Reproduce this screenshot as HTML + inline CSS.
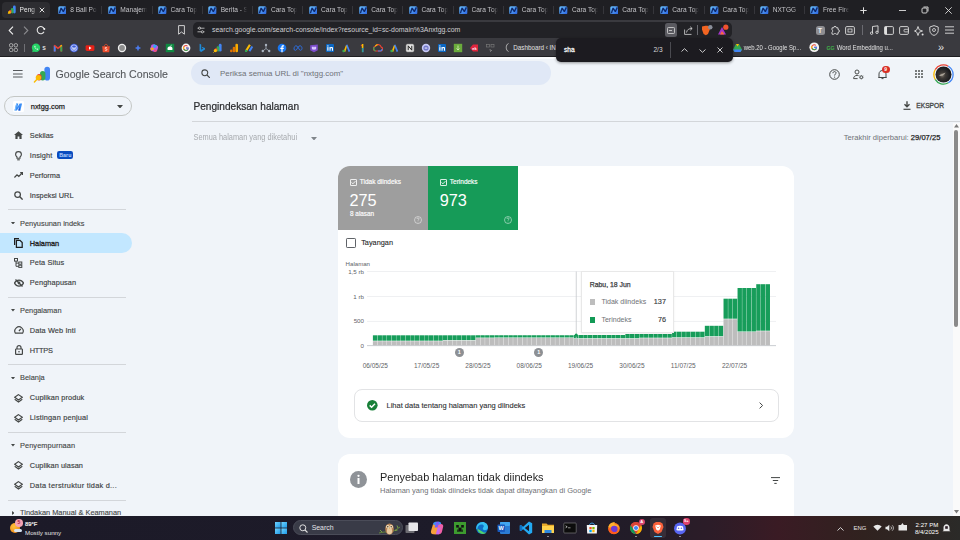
<!DOCTYPE html>
<html><head><meta charset="utf-8"><style>
html,body{margin:0;padding:0;width:960px;height:540px;overflow:hidden;background:#f0f4f9;font-family:"Liberation Sans", sans-serif}
.t{position:absolute;white-space:nowrap;font-family:"Liberation Sans", sans-serif}
</style></head><body>
<div style="position:absolute;left:0px;top:0px;width:960px;height:20px;background:#1f1f23"></div>
<div style="position:absolute;left:2px;top:2px;width:48px;height:15.5px;background:#2d2d31;border-radius:4px"></div>
<svg style="position:absolute;left:7px;top:4.5px" width="9.6" height="9.6" viewBox="0 0 16 16"><rect x="10" y="1" width="4.5" height="13" rx="2.25" fill="#4285f4"/><rect x="6.5" y="5" width="4.5" height="9" rx="2.25" fill="#34a853"/><rect x="3" y="8.5" width="4.5" height="5.5" rx="2.25" fill="#ea4335"/><circle cx="4" cy="12.5" r="2.3" fill="#fbbc04"/><path d="M1 15.5 L4 12.5" stroke="#fbbc04" stroke-width="1.2"/></svg>
<div class="t" style="left:19.6px;top:5.8px;font-size:6.6px;line-height:8.4px;color:#e8e8e8;width:16px;overflow:hidden;transform:scaleY(1.08);-webkit-mask-image:linear-gradient(90deg,#000 70%,rgba(0,0,0,.3))">Peng</div>
<svg style="position:absolute;left:39px;top:7px" width="6" height="6" viewBox="0 0 6 6"><path d="M0.8 0.8L5.2 5.2M5.2 0.8L0.8 5.2" stroke="#e0e0e0" stroke-width="1"/></svg>
<svg style="position:absolute;left:57.68px;top:5.8px" width="8.6" height="8.6" viewBox="0 0 10 10"><defs><linearGradient id="ng" x1="0" y1="0" x2="1" y2="1"><stop offset="0" stop-color="#6cc4ff"/><stop offset="1" stop-color="#2a62e0"/></linearGradient></defs><rect x="0.3" y="0.3" width="9.4" height="9.4" rx="1.8" fill="url(#ng)"/><path d="M1.6 8.4 L3.6 2.4 L6.2 6.6 L8.6 1.6" stroke="#0e2a6e" stroke-width="1.6" fill="none" stroke-linejoin="bevel"/></svg>
<div class="t" style="left:70.18px;top:5.8px;font-size:6.6px;line-height:8.4px;color:#c4c4c8;width:26.5px;overflow:hidden;transform:scaleY(1.06);-webkit-mask-image:linear-gradient(90deg,#000 78%,transparent)">8 Ball Pol</div>
<div style="position:absolute;left:101.36px;top:6px;width:0.7px;height:8px;background:#36363b"></div>
<svg style="position:absolute;left:107.86px;top:5.8px" width="8.6" height="8.6" viewBox="0 0 10 10"><defs><linearGradient id="ng" x1="0" y1="0" x2="1" y2="1"><stop offset="0" stop-color="#6cc4ff"/><stop offset="1" stop-color="#2a62e0"/></linearGradient></defs><rect x="0.3" y="0.3" width="9.4" height="9.4" rx="1.8" fill="url(#ng)"/><path d="M1.6 8.4 L3.6 2.4 L6.2 6.6 L8.6 1.6" stroke="#0e2a6e" stroke-width="1.6" fill="none" stroke-linejoin="bevel"/></svg>
<div class="t" style="left:120.36px;top:5.8px;font-size:6.6px;line-height:8.4px;color:#c4c4c8;width:26.5px;overflow:hidden;transform:scaleY(1.06);-webkit-mask-image:linear-gradient(90deg,#000 78%,transparent)">Manajem</div>
<div style="position:absolute;left:151.54px;top:6px;width:0.7px;height:8px;background:#36363b"></div>
<svg style="position:absolute;left:158.04px;top:5.8px" width="8.6" height="8.6" viewBox="0 0 10 10"><defs><linearGradient id="ng" x1="0" y1="0" x2="1" y2="1"><stop offset="0" stop-color="#6cc4ff"/><stop offset="1" stop-color="#2a62e0"/></linearGradient></defs><rect x="0.3" y="0.3" width="9.4" height="9.4" rx="1.8" fill="url(#ng)"/><path d="M1.6 8.4 L3.6 2.4 L6.2 6.6 L8.6 1.6" stroke="#0e2a6e" stroke-width="1.6" fill="none" stroke-linejoin="bevel"/></svg>
<div class="t" style="left:170.54px;top:5.8px;font-size:6.6px;line-height:8.4px;color:#c4c4c8;width:26.5px;overflow:hidden;transform:scaleY(1.06);-webkit-mask-image:linear-gradient(90deg,#000 78%,transparent)">Cara Top</div>
<div style="position:absolute;left:201.72px;top:6px;width:0.7px;height:8px;background:#36363b"></div>
<svg style="position:absolute;left:208.22px;top:5.8px" width="8.6" height="8.6" viewBox="0 0 10 10"><defs><linearGradient id="ng" x1="0" y1="0" x2="1" y2="1"><stop offset="0" stop-color="#6cc4ff"/><stop offset="1" stop-color="#2a62e0"/></linearGradient></defs><rect x="0.3" y="0.3" width="9.4" height="9.4" rx="1.8" fill="url(#ng)"/><path d="M1.6 8.4 L3.6 2.4 L6.2 6.6 L8.6 1.6" stroke="#0e2a6e" stroke-width="1.6" fill="none" stroke-linejoin="bevel"/></svg>
<div class="t" style="left:220.72px;top:5.8px;font-size:6.6px;line-height:8.4px;color:#c4c4c8;width:26.5px;overflow:hidden;transform:scaleY(1.06);-webkit-mask-image:linear-gradient(90deg,#000 78%,transparent)">Berita - S</div>
<div style="position:absolute;left:251.89999999999998px;top:6px;width:0.7px;height:8px;background:#36363b"></div>
<svg style="position:absolute;left:258.4px;top:5.8px" width="8.6" height="8.6" viewBox="0 0 10 10"><defs><linearGradient id="ng" x1="0" y1="0" x2="1" y2="1"><stop offset="0" stop-color="#6cc4ff"/><stop offset="1" stop-color="#2a62e0"/></linearGradient></defs><rect x="0.3" y="0.3" width="9.4" height="9.4" rx="1.8" fill="url(#ng)"/><path d="M1.6 8.4 L3.6 2.4 L6.2 6.6 L8.6 1.6" stroke="#0e2a6e" stroke-width="1.6" fill="none" stroke-linejoin="bevel"/></svg>
<div class="t" style="left:270.9px;top:5.8px;font-size:6.6px;line-height:8.4px;color:#c4c4c8;width:26.5px;overflow:hidden;transform:scaleY(1.06);-webkit-mask-image:linear-gradient(90deg,#000 78%,transparent)">Cara Top</div>
<div style="position:absolute;left:302.08px;top:6px;width:0.7px;height:8px;background:#36363b"></div>
<svg style="position:absolute;left:308.58px;top:5.8px" width="8.6" height="8.6" viewBox="0 0 10 10"><defs><linearGradient id="ng" x1="0" y1="0" x2="1" y2="1"><stop offset="0" stop-color="#6cc4ff"/><stop offset="1" stop-color="#2a62e0"/></linearGradient></defs><rect x="0.3" y="0.3" width="9.4" height="9.4" rx="1.8" fill="url(#ng)"/><path d="M1.6 8.4 L3.6 2.4 L6.2 6.6 L8.6 1.6" stroke="#0e2a6e" stroke-width="1.6" fill="none" stroke-linejoin="bevel"/></svg>
<div class="t" style="left:321.08px;top:5.8px;font-size:6.6px;line-height:8.4px;color:#c4c4c8;width:26.5px;overflow:hidden;transform:scaleY(1.06);-webkit-mask-image:linear-gradient(90deg,#000 78%,transparent)">Cara Top</div>
<div style="position:absolute;left:352.26px;top:6px;width:0.7px;height:8px;background:#36363b"></div>
<svg style="position:absolute;left:358.76px;top:5.8px" width="8.6" height="8.6" viewBox="0 0 10 10"><defs><linearGradient id="ng" x1="0" y1="0" x2="1" y2="1"><stop offset="0" stop-color="#6cc4ff"/><stop offset="1" stop-color="#2a62e0"/></linearGradient></defs><rect x="0.3" y="0.3" width="9.4" height="9.4" rx="1.8" fill="url(#ng)"/><path d="M1.6 8.4 L3.6 2.4 L6.2 6.6 L8.6 1.6" stroke="#0e2a6e" stroke-width="1.6" fill="none" stroke-linejoin="bevel"/></svg>
<div class="t" style="left:371.26px;top:5.8px;font-size:6.6px;line-height:8.4px;color:#c4c4c8;width:26.5px;overflow:hidden;transform:scaleY(1.06);-webkit-mask-image:linear-gradient(90deg,#000 78%,transparent)">Cara Top</div>
<div style="position:absolute;left:402.44px;top:6px;width:0.7px;height:8px;background:#36363b"></div>
<svg style="position:absolute;left:408.94px;top:5.8px" width="8.6" height="8.6" viewBox="0 0 10 10"><defs><linearGradient id="ng" x1="0" y1="0" x2="1" y2="1"><stop offset="0" stop-color="#6cc4ff"/><stop offset="1" stop-color="#2a62e0"/></linearGradient></defs><rect x="0.3" y="0.3" width="9.4" height="9.4" rx="1.8" fill="url(#ng)"/><path d="M1.6 8.4 L3.6 2.4 L6.2 6.6 L8.6 1.6" stroke="#0e2a6e" stroke-width="1.6" fill="none" stroke-linejoin="bevel"/></svg>
<div class="t" style="left:421.44px;top:5.8px;font-size:6.6px;line-height:8.4px;color:#c4c4c8;width:26.5px;overflow:hidden;transform:scaleY(1.06);-webkit-mask-image:linear-gradient(90deg,#000 78%,transparent)">Cara Top</div>
<div style="position:absolute;left:452.62px;top:6px;width:0.7px;height:8px;background:#36363b"></div>
<svg style="position:absolute;left:459.12px;top:5.8px" width="8.6" height="8.6" viewBox="0 0 10 10"><defs><linearGradient id="ng" x1="0" y1="0" x2="1" y2="1"><stop offset="0" stop-color="#6cc4ff"/><stop offset="1" stop-color="#2a62e0"/></linearGradient></defs><rect x="0.3" y="0.3" width="9.4" height="9.4" rx="1.8" fill="url(#ng)"/><path d="M1.6 8.4 L3.6 2.4 L6.2 6.6 L8.6 1.6" stroke="#0e2a6e" stroke-width="1.6" fill="none" stroke-linejoin="bevel"/></svg>
<div class="t" style="left:471.62px;top:5.8px;font-size:6.6px;line-height:8.4px;color:#c4c4c8;width:26.5px;overflow:hidden;transform:scaleY(1.06);-webkit-mask-image:linear-gradient(90deg,#000 78%,transparent)">Cara Top</div>
<div style="position:absolute;left:502.8px;top:6px;width:0.7px;height:8px;background:#36363b"></div>
<svg style="position:absolute;left:509.3px;top:5.8px" width="8.6" height="8.6" viewBox="0 0 10 10"><defs><linearGradient id="ng" x1="0" y1="0" x2="1" y2="1"><stop offset="0" stop-color="#6cc4ff"/><stop offset="1" stop-color="#2a62e0"/></linearGradient></defs><rect x="0.3" y="0.3" width="9.4" height="9.4" rx="1.8" fill="url(#ng)"/><path d="M1.6 8.4 L3.6 2.4 L6.2 6.6 L8.6 1.6" stroke="#0e2a6e" stroke-width="1.6" fill="none" stroke-linejoin="bevel"/></svg>
<div class="t" style="left:521.8px;top:5.8px;font-size:6.6px;line-height:8.4px;color:#c4c4c8;width:26.5px;overflow:hidden;transform:scaleY(1.06);-webkit-mask-image:linear-gradient(90deg,#000 78%,transparent)">Cara Top</div>
<div style="position:absolute;left:552.98px;top:6px;width:0.7px;height:8px;background:#36363b"></div>
<svg style="position:absolute;left:559.48px;top:5.8px" width="8.6" height="8.6" viewBox="0 0 10 10"><defs><linearGradient id="ng" x1="0" y1="0" x2="1" y2="1"><stop offset="0" stop-color="#6cc4ff"/><stop offset="1" stop-color="#2a62e0"/></linearGradient></defs><rect x="0.3" y="0.3" width="9.4" height="9.4" rx="1.8" fill="url(#ng)"/><path d="M1.6 8.4 L3.6 2.4 L6.2 6.6 L8.6 1.6" stroke="#0e2a6e" stroke-width="1.6" fill="none" stroke-linejoin="bevel"/></svg>
<div class="t" style="left:571.98px;top:5.8px;font-size:6.6px;line-height:8.4px;color:#c4c4c8;width:26.5px;overflow:hidden;transform:scaleY(1.06);-webkit-mask-image:linear-gradient(90deg,#000 78%,transparent)">Cara Top</div>
<div style="position:absolute;left:603.16px;top:6px;width:0.7px;height:8px;background:#36363b"></div>
<svg style="position:absolute;left:609.66px;top:5.8px" width="8.6" height="8.6" viewBox="0 0 10 10"><defs><linearGradient id="ng" x1="0" y1="0" x2="1" y2="1"><stop offset="0" stop-color="#6cc4ff"/><stop offset="1" stop-color="#2a62e0"/></linearGradient></defs><rect x="0.3" y="0.3" width="9.4" height="9.4" rx="1.8" fill="url(#ng)"/><path d="M1.6 8.4 L3.6 2.4 L6.2 6.6 L8.6 1.6" stroke="#0e2a6e" stroke-width="1.6" fill="none" stroke-linejoin="bevel"/></svg>
<div class="t" style="left:622.16px;top:5.8px;font-size:6.6px;line-height:8.4px;color:#c4c4c8;width:26.5px;overflow:hidden;transform:scaleY(1.06);-webkit-mask-image:linear-gradient(90deg,#000 78%,transparent)">Cara Top</div>
<div style="position:absolute;left:653.34px;top:6px;width:0.7px;height:8px;background:#36363b"></div>
<svg style="position:absolute;left:659.84px;top:5.8px" width="8.6" height="8.6" viewBox="0 0 10 10"><defs><linearGradient id="ng" x1="0" y1="0" x2="1" y2="1"><stop offset="0" stop-color="#6cc4ff"/><stop offset="1" stop-color="#2a62e0"/></linearGradient></defs><rect x="0.3" y="0.3" width="9.4" height="9.4" rx="1.8" fill="url(#ng)"/><path d="M1.6 8.4 L3.6 2.4 L6.2 6.6 L8.6 1.6" stroke="#0e2a6e" stroke-width="1.6" fill="none" stroke-linejoin="bevel"/></svg>
<div class="t" style="left:672.34px;top:5.8px;font-size:6.6px;line-height:8.4px;color:#c4c4c8;width:26.5px;overflow:hidden;transform:scaleY(1.06);-webkit-mask-image:linear-gradient(90deg,#000 78%,transparent)">Cara Top</div>
<div style="position:absolute;left:703.52px;top:6px;width:0.7px;height:8px;background:#36363b"></div>
<svg style="position:absolute;left:710.02px;top:5.8px" width="8.6" height="8.6" viewBox="0 0 10 10"><defs><linearGradient id="ng" x1="0" y1="0" x2="1" y2="1"><stop offset="0" stop-color="#6cc4ff"/><stop offset="1" stop-color="#2a62e0"/></linearGradient></defs><rect x="0.3" y="0.3" width="9.4" height="9.4" rx="1.8" fill="url(#ng)"/><path d="M1.6 8.4 L3.6 2.4 L6.2 6.6 L8.6 1.6" stroke="#0e2a6e" stroke-width="1.6" fill="none" stroke-linejoin="bevel"/></svg>
<div class="t" style="left:722.52px;top:5.8px;font-size:6.6px;line-height:8.4px;color:#c4c4c8;width:26.5px;overflow:hidden;transform:scaleY(1.06);-webkit-mask-image:linear-gradient(90deg,#000 78%,transparent)">Cara Top</div>
<div style="position:absolute;left:753.7px;top:6px;width:0.7px;height:8px;background:#36363b"></div>
<svg style="position:absolute;left:760.2px;top:5.8px" width="8.6" height="8.6" viewBox="0 0 10 10"><defs><linearGradient id="ng" x1="0" y1="0" x2="1" y2="1"><stop offset="0" stop-color="#6cc4ff"/><stop offset="1" stop-color="#2a62e0"/></linearGradient></defs><rect x="0.3" y="0.3" width="9.4" height="9.4" rx="1.8" fill="url(#ng)"/><path d="M1.6 8.4 L3.6 2.4 L6.2 6.6 L8.6 1.6" stroke="#0e2a6e" stroke-width="1.6" fill="none" stroke-linejoin="bevel"/></svg>
<div class="t" style="left:772.7px;top:5.8px;font-size:6.6px;line-height:8.4px;color:#c4c4c8;width:26.5px;overflow:hidden;transform:scaleY(1.06);-webkit-mask-image:linear-gradient(90deg,#000 78%,transparent)">NXTGG -</div>
<div style="position:absolute;left:803.88px;top:6px;width:0.7px;height:8px;background:#36363b"></div>
<svg style="position:absolute;left:810.38px;top:5.8px" width="8.6" height="8.6" viewBox="0 0 10 10"><defs><linearGradient id="ng" x1="0" y1="0" x2="1" y2="1"><stop offset="0" stop-color="#6cc4ff"/><stop offset="1" stop-color="#2a62e0"/></linearGradient></defs><rect x="0.3" y="0.3" width="9.4" height="9.4" rx="1.8" fill="url(#ng)"/><path d="M1.6 8.4 L3.6 2.4 L6.2 6.6 L8.6 1.6" stroke="#0e2a6e" stroke-width="1.6" fill="none" stroke-linejoin="bevel"/></svg>
<div class="t" style="left:822.88px;top:5.8px;font-size:6.6px;line-height:8.4px;color:#c4c4c8;width:26.5px;overflow:hidden;transform:scaleY(1.06);-webkit-mask-image:linear-gradient(90deg,#000 78%,transparent)">Free Fire</div>
<svg style="position:absolute;left:859.5px;top:6.5px" width="7" height="7" viewBox="0 0 7 7"><path d="M3.5 0.3V6.7M0.3 3.5H6.7" stroke="#e0e0e0" stroke-width="1"/></svg>
<svg style="position:absolute;left:899px;top:9.5px" width="7" height="1" viewBox="0 0 7 1"><path d="M0 0.5H7" stroke="#e0e0e0" stroke-width="0.9"/></svg>
<svg style="position:absolute;left:921px;top:6px" width="8" height="8" viewBox="0 0 8 8"><rect x="1" y="2" width="5" height="5" rx="1" fill="none" stroke="#e0e0e0" stroke-width="0.9"/><path d="M2.5 1H7V5.5" fill="none" stroke="#e0e0e0" stroke-width="0.9"/></svg>
<svg style="position:absolute;left:944.5px;top:6.5px" width="7" height="7" viewBox="0 0 7 7"><path d="M0.3 0.3L6.7 6.7M6.7 0.3L0.3 6.7" stroke="#e0e0e0" stroke-width="0.9"/></svg>
<div style="position:absolute;left:0px;top:20px;width:960px;height:37px;background:#3a3a3f"></div>
<svg style="position:absolute;left:8px;top:25.5px" width="6" height="9" viewBox="0 0 6 9"><path d="M5 0.6L1.2 4.5L5 8.4" fill="none" stroke="#f0f0f0" stroke-width="1.1"/></svg>
<svg style="position:absolute;left:23px;top:25.5px" width="6" height="9" viewBox="0 0 6 9"><path d="M1 0.6L4.8 4.5L1 8.4" fill="none" stroke="#8c8c90" stroke-width="1.1"/></svg>
<svg style="position:absolute;left:35.5px;top:24.5px" width="10" height="10" viewBox="0 0 10 10"><path d="M8.2 4A3.6 3.6 0 1 0 8 6.8" fill="none" stroke="#e8e8e8" stroke-width="1.1"/><circle cx="8.3" cy="4" r="1" fill="#f4f4f4"/></svg>
<svg style="position:absolute;left:178px;top:25px" width="7" height="10" viewBox="0 0 7 10"><path d="M0.6 0.6H6.4V9.2L3.5 7L0.6 9.2Z" fill="none" stroke="#e0e0e0" stroke-width="0.9"/></svg>
<div style="position:absolute;left:193.3px;top:22px;width:539.2px;height:16px;background:#222226;border-radius:5px"></div>
<svg style="position:absolute;left:197px;top:26px" width="8" height="8" viewBox="0 0 8 8"><path d="M0.5 2.2H7.5M0.5 5.8H7.5" stroke="#d0d0d0" stroke-width="0.8"/><circle cx="2.6" cy="2.2" r="1.1" fill="#232327" stroke="#d0d0d0" stroke-width="0.8"/><circle cx="5.4" cy="5.8" r="1.1" fill="#232327" stroke="#d0d0d0" stroke-width="0.8"/></svg>
<div class="t" style="left:212px;top:26.34px;font-size:6.93px;line-height:8.32px;color:#cfcfd3;font-weight:400;">search.google.com/search-console/index?resource_id=sc-domain%3Anxtgg.com</div>
<div style="position:absolute;left:664.5px;top:23.2px;width:12.5px;height:13.6px;background:#5a5a60;border-radius:2.5px"></div>
<svg style="position:absolute;left:667px;top:26.5px" width="8" height="7" viewBox="0 0 8 7"><rect x="0.5" y="0.5" width="7" height="6" rx="0.8" fill="none" stroke="#d8d8d8" stroke-width="0.8"/><path d="M2 3.5H5" stroke="#d8d8d8" stroke-width="0.8"/></svg>
<svg style="position:absolute;left:684px;top:25.5px" width="9" height="9" viewBox="0 0 9 9"><path d="M0.6 3.5V8.4H7.5" fill="none" stroke="#d8d8d8" stroke-width="0.8"/><path d="M2.5 6.5C3 3.5 5 2.5 8 2.5M6.2 0.7L8.2 2.5L6.2 4.3" fill="none" stroke="#d8d8d8" stroke-width="0.8"/></svg>
<div style="position:absolute;left:696.5px;top:25px;width:0.8px;height:10px;background:#6a6a70"></div>
<svg style="position:absolute;left:701px;top:24.5px" width="12" height="11" viewBox="0 0 12 11"><path d="M1 1.5L4.5 0.8H6.5L8 1.5L8.8 4.5L7 9L4.8 10.3L2.6 9L1 4.5Z" fill="#f26522"/><circle cx="9.3" cy="2.3" r="2.2" fill="#8a8f9a"/></svg>
<svg style="position:absolute;left:717px;top:24px" width="13" height="12" viewBox="0 0 13 12"><path d="M1 10.5L5 3L9 10.5Z" fill="#a335c9"/><path d="M3 10.5L5 7L7.5 10.5Z" fill="#ff6a3d"/><circle cx="8.8" cy="3.2" r="2.6" fill="#f0522f"/></svg>
<div style="position:absolute;left:862px;top:25px;width:0.8px;height:10px;background:#6a6a70"></div>
<div style="position:absolute;left:815.5px;top:25.5px;width:9px;height:9px;border-radius:2.5px;background:#8e8e92;color:#f4f4f4;font:bold 6.5px/9px 'Liberation Sans';text-align:center">T</div>
<svg style="position:absolute;left:830px;top:25px" width="10" height="10" viewBox="0 0 10 10"><path d="M2 2.8H3.6A1.4 1.4 0 0 1 6.4 2.8H8V4.6A1.4 1.4 0 0 1 8 7.4V9.2H6.2A1.4 1.4 0 0 0 3.8 9.2H2V7.2A1.4 1.4 0 0 0 2 4.8Z" fill="none" stroke="#e0e0e0" stroke-width="0.9"/></svg>
<svg style="position:absolute;left:844.5px;top:25.5px" width="10" height="9" viewBox="0 0 10 9"><rect x="0.6" y="0.6" width="8.8" height="7.8" rx="1.2" fill="none" stroke="#e0e0e0" stroke-width="0.9"/><rect x="3" y="3" width="4" height="3" fill="none" stroke="#e0e0e0" stroke-width="0.8"/></svg>
<svg style="position:absolute;left:869.5px;top:25px" width="9" height="10" viewBox="0 0 9 10"><path d="M2.5 8V1.5L8 0.8V7" fill="none" stroke="#e0e0e0" stroke-width="0.9"/><circle cx="1.6" cy="8.2" r="1.2" fill="none" stroke="#e0e0e0" stroke-width="0.9"/><circle cx="7" cy="7.3" r="1.2" fill="none" stroke="#e0e0e0" stroke-width="0.9"/></svg>
<svg style="position:absolute;left:884px;top:25.5px" width="10" height="9" viewBox="0 0 10 9"><rect x="0.6" y="0.6" width="8.8" height="7.8" rx="1" fill="none" stroke="#e0e0e0" stroke-width="0.9"/><rect x="0.6" y="0.6" width="2.4" height="7.8" fill="#e0e0e0"/></svg>
<svg style="position:absolute;left:899px;top:25.5px" width="10" height="9" viewBox="0 0 10 9"><rect x="0.6" y="0.6" width="8.8" height="7.8" rx="1.2" fill="none" stroke="#e0e0e0" stroke-width="0.9"/><rect x="5" y="3.3" width="4.4" height="2.6" rx="0.8" fill="none" stroke="#e0e0e0" stroke-width="0.8"/></svg>
<svg style="position:absolute;left:914px;top:24.5px" width="10" height="11" viewBox="0 0 10 11"><path d="M4 1.5L5.2 4.8L8.5 6L5.2 7.2L4 10.5L2.8 7.2L0.5 6L2.8 4.8Z" fill="none" stroke="#e0e0e0" stroke-width="0.9"/><circle cx="8.6" cy="9.4" r="1" fill="#e0e0e0"/></svg>
<svg style="position:absolute;left:929px;top:24.5px" width="10" height="11" viewBox="0 0 10 11"><path d="M5 0.6L9.2 2V5.5C9.2 8 7.2 9.8 5 10.4C2.8 9.8 0.8 8 0.8 5.5V2Z" fill="none" stroke="#e0e0e0" stroke-width="0.9"/><circle cx="5" cy="5" r="1.5" fill="none" stroke="#e0e0e0" stroke-width="0.8"/></svg>
<svg style="position:absolute;left:944.5px;top:26px" width="9" height="8" viewBox="0 0 9 8"><path d="M0 0.8H9M0 4H9M0 7.2H9" stroke="#e0e0e0" stroke-width="0.9"/></svg>
<svg style="position:absolute;left:8.5px;top:43px" width="9" height="9.3" viewBox="0 0 9 9"><g fill="none" stroke="#d0d0d0" stroke-width="0.75"><rect x="0.5" y="0.5" width="3.3" height="3.3" rx="1.3"/><rect x="5.2" y="0.5" width="3.3" height="3.3" rx="1.3"/><rect x="0.5" y="5.2" width="3.3" height="3.3" rx="1.3"/><rect x="5.2" y="5.2" width="3.3" height="3.3" rx="1.3"/></g></svg>
<div style="position:absolute;left:24.2px;top:43.5px;width:0.8px;height:8px;background:#707075"></div>
<svg style="position:absolute;left:30.9px;top:42.6px" width="10" height="10" viewBox="0 0 10 10"><circle cx="5" cy="4.8" r="4.2" fill="#25d366"/><path d="M1.2 9.3L1.8 6.8L3.5 8.4Z" fill="#25d366"/><path d="M3.4 3C3.2 4.8 5 6.8 6.9 6.7L7.3 5.9L6.2 5.4L5.7 5.9C5 5.6 4.4 5 4.1 4.3L4.6 3.8L4.1 2.7Z" fill="#fff"/></svg>
<svg style="position:absolute;left:53.1px;top:42.6px" width="10" height="10" viewBox="0 0 10 10"><path d="M0.8 2.5L1.8 1.8L5 4.3L8.2 1.8L9.2 2.5V8.4H7.4V4.4L5 6.2L2.6 4.4V8.4H0.8Z" fill="#ea4335"/><path d="M0.8 2.5V8.4H2.6V4.4Z" fill="#4285f4"/><path d="M9.2 2.5V8.4H7.4V4.4Z" fill="#34a853"/><path d="M7.4 4.4L9.2 2.5L8.2 1.8L7.4 2.4Z" fill="#fbbc04"/></svg>
<svg style="position:absolute;left:69.1px;top:42.6px" width="10" height="10" viewBox="0 0 10 10"><circle cx="5" cy="5" r="4.3" fill="#3b5bdb"/><circle cx="5" cy="5" r="3.1" fill="none" stroke="#dfe6ff" stroke-width="0.7"/><path d="M3 3.6L4.1 6.8L5 4.5L5.9 6.8L7 3.6" fill="none" stroke="#fff" stroke-width="0.7"/></svg>
<svg style="position:absolute;left:85.0px;top:42.6px" width="10" height="10" viewBox="0 0 10 10"><rect x="0.6" y="2.2" width="8.8" height="5.8" rx="1.4" fill="#e62117"/><path d="M4 3.5L6.5 5.1L4 6.7Z" fill="#fff"/></svg>
<svg style="position:absolute;left:101.0px;top:42.6px" width="10" height="10" viewBox="0 0 10 10"><path d="M1.2 3.2H8.8L8.2 9.2H1.8Z" fill="#ee4d2d"/><path d="M3.3 3.2C3.3 0.8 6.7 0.8 6.7 3.2" fill="none" stroke="#ee4d2d" stroke-width="0.8"/><path d="M6 4.8C5.2 4.2 4 4.4 4 5.1C4 6 6 5.7 6 6.7C6 7.5 4.6 7.6 3.9 7" fill="none" stroke="#fff" stroke-width="0.7"/></svg>
<svg style="position:absolute;left:116.9px;top:42.6px" width="10" height="10" viewBox="0 0 10 10"><circle cx="5" cy="5" r="4.2" fill="#f0f0f0"/><circle cx="5" cy="5" r="2.9" fill="#8e8e8e"/></svg>
<svg style="position:absolute;left:132.6px;top:42.6px" width="10" height="10" viewBox="0 0 10 10"><path d="M5 1.8L6 4L8.2 5L6 6L5 8.2L4 6L1.8 5L4 4Z" fill="#4b7bec"/></svg>
<svg style="position:absolute;left:148.8px;top:42.6px" width="10" height="10" viewBox="0 0 10 10"><path d="M2 3.5C2 1.8 3.5 1 5 1.3L8 2.5C9 3 9.3 4 9 5L8.2 7.2C7.7 8.6 6.4 9.2 5 8.8L2.3 7.8C1.2 7.3 1 6.2 1.3 5.2Z" fill="#c058e0"/><path d="M5 1.3L8 2.5L6.5 5L3.8 4.2Z" fill="#2ea8f5"/><path d="M1.3 5.2L3.8 4.2L5.3 6.3L2.3 7.8Z" fill="#f5a524"/><path d="M5.3 6.3L8.2 7.2C7.7 8.6 6.4 9.2 5 8.8Z" fill="#f04e7a"/></svg>
<svg style="position:absolute;left:165.0px;top:42.6px" width="10" height="10" viewBox="0 0 10 10"><rect x="0.8" y="0.8" width="8.4" height="8.4" fill="#0f8a42"/><path d="M2.6 7V5.3C2.6 4.2 3.6 3.6 5 3.6C6.4 3.6 7.4 4.2 7.4 5.3V7Z" fill="#fff"/><path d="M5.6 3.6L6.4 1.8" stroke="#fff" stroke-width="0.6"/></svg>
<svg style="position:absolute;left:180.9px;top:42.6px" width="10" height="10" viewBox="0 0 10 10"><circle cx="5" cy="5" r="4.4" fill="#f4f4f4"/><path d="M7.6 4.6H5V5.6H6.5C6.3 6.4 5.7 6.9 5 6.9C3.9 6.9 3.1 6.1 3.1 5C3.1 3.9 3.9 3.1 5 3.1C5.5 3.1 5.9 3.3 6.2 3.6L6.9 2.9C6.4 2.4 5.7 2.1 5 2.1C3.4 2.1 2.1 3.4 2.1 5C2.1 6.6 3.4 7.9 5 7.9C6.6 7.9 7.7 6.8 7.7 5.1Z" fill="#ea4335"/><path d="M2.4 6.3C2.9 7.3 3.9 7.9 5 7.9C5.9 7.9 6.7 7.5 7.2 6.9L6.4 6.3C6.1 6.7 5.6 6.9 5 6.9C4.2 6.9 3.6 6.4 3.3 5.8Z" fill="#34a853"/><path d="M7.6 4.6H5V5.6H6.5C6.4 5.9 6.3 6.1 6.2 6.2L7.1 6.9C7.5 6.4 7.7 5.8 7.7 5.1Z" fill="#4285f4"/><path d="M2.1 5C2.1 5.5 2.2 5.9 2.4 6.3L3.3 5.8C3.2 5.5 3.1 5.3 3.1 5C3.1 4.7 3.2 4.4 3.3 4.2L2.4 3.6C2.2 4 2.1 4.5 2.1 5Z" fill="#fbbc04"/></svg>
<svg style="position:absolute;left:197.0px;top:42.6px" width="10" height="10" viewBox="0 0 10 10"><path d="M2.6 0.8L4.2 1.4V6.8L6.2 5.6L5.2 5.1L4.7 3.8L8 5L8 6.5L4.2 8.9L2.6 7.9Z" fill="#1f8ad6"/></svg>
<svg style="position:absolute;left:213.0px;top:42.6px" width="10" height="10" viewBox="0 0 10 10"><rect x="5.8" y="0.8" width="2.8" height="7.8" rx="1.4" fill="#4285f4"/><rect x="3.6" y="3.2" width="2.8" height="5.4" rx="1.4" fill="#34a853"/><rect x="1.6" y="5.2" width="2.8" height="3.4" rx="1.4" fill="#ea4335"/><circle cx="2.4" cy="7.6" r="1.6" fill="#fbbc04"/><path d="M0.4 9.6L1.8 8.2" stroke="#fbbc04" stroke-width="0.9"/></svg>
<svg style="position:absolute;left:229.3px;top:42.6px" width="10" height="10" viewBox="0 0 10 10"><rect x="6.4" y="0.8" width="2.6" height="8.4" rx="1.2" fill="#f9ab00"/><rect x="3.7" y="3.8" width="2.6" height="5.4" rx="1.2" fill="#e37400"/><circle cx="2.3" cy="7.9" r="1.3" fill="#e37400"/></svg>
<svg style="position:absolute;left:244.3px;top:42.6px" width="10" height="10" viewBox="0 0 10 10"><path d="M1.2 7.2L5 1.2L6.8 2.3L3 8.3Z" fill="#fbbc04"/><path d="M4.6 7.6L7.5 3L9.2 4.1L6.3 8.7Z" fill="#4285f4"/><circle cx="2.1" cy="7.9" r="1.2" fill="#34a853"/></svg>
<svg style="position:absolute;left:260.8px;top:42.6px" width="10" height="10" viewBox="0 0 10 10"><circle cx="5" cy="2" r="1.2" fill="#aab4c0"/><circle cx="1.8" cy="8" r="1.2" fill="#aab4c0"/><circle cx="8.2" cy="8" r="1.2" fill="#aab4c0"/><path d="M5 2V5.5L1.8 8M5 5.5L8.2 8" stroke="#aab4c0" stroke-width="0.8" fill="none"/></svg>
<svg style="position:absolute;left:277.0px;top:42.6px" width="10" height="10" viewBox="0 0 10 10"><circle cx="5" cy="5" r="4.3" fill="#1877f2"/><path d="M5.6 9.3V6H6.7L6.9 4.8H5.6V4C5.6 3.6 5.8 3.4 6.2 3.4H7V2.3C6.6 2.2 6.2 2.2 5.9 2.2C5 2.2 4.4 2.8 4.4 3.8V4.8H3.3V6H4.4V9.3Z" fill="#fff"/></svg>
<svg style="position:absolute;left:293.0px;top:42.6px" width="10" height="10" viewBox="0 0 10 10"><path d="M1 6C1 4 2 2.8 3 2.8C4.5 2.8 5.5 5 6 6C6.5 6.8 7 7.3 7.5 7.3C8.3 7.3 9 6.6 9 5.3C9 4 8.2 2.8 7 2.8C5.5 2.8 4.5 5 4 6C3.5 6.8 3 7.3 2.4 7.3C1.6 7.3 1 6.8 1 6Z" fill="none" stroke="#2d6fe0" stroke-width="0.95"/></svg>
<svg style="position:absolute;left:309.0px;top:42.6px" width="10" height="10" viewBox="0 0 10 10"><path d="M1.2 2.2L8.8 1.6V7.2L5 9.2L1.2 7.2Z" fill="#7c4dcc"/><path d="M2.8 4L4.2 3.6L5 4.4L5.8 3.6L7.2 4L7 6.2L5 6.8L3 6.2Z" fill="#d9c8ff"/></svg>
<svg style="position:absolute;left:325.0px;top:42.6px" width="10" height="10" viewBox="0 0 10 10"><rect x="1" y="1" width="8" height="8" rx="1" fill="#0a66c2"/><rect x="2.3" y="4.1" width="1.2" height="3.6" fill="#fff"/><circle cx="2.9" cy="2.9" r="0.7" fill="#fff"/><path d="M4.5 7.7V4.1H5.6V4.6C5.9 4.1 6.4 4 6.8 4C7.6 4 8 4.5 8 5.4V7.7H6.9V5.6C6.9 5.1 6.7 4.9 6.3 4.9C5.9 4.9 5.6 5.2 5.6 5.7V7.7Z" fill="#fff"/></svg>
<svg style="position:absolute;left:340.8px;top:42.6px" width="10" height="10" viewBox="0 0 10 10"><path d="M2.6 8.4L5 2L6.4 2.6L4.2 9Z" fill="#fbbc04"/><path d="M5 2L6.4 1.6L9.2 8.3L7.6 9Z" fill="#4285f4"/><circle cx="2.6" cy="8" r="1.3" fill="#34a853"/></svg>
<svg style="position:absolute;left:356.8px;top:42.6px" width="10" height="10" viewBox="0 0 10 10"><path d="M3.5 2.5L6 1V4Z" fill="#ea4335"/><rect x="4.8" y="1" width="1.6" height="4" fill="#fbbc04"/><rect x="4.8" y="5" width="1.6" height="4.2" fill="#34a853"/><rect x="5.6" y="5" width="0.8" height="4.2" fill="#4285f4"/></svg>
<svg style="position:absolute;left:372.5px;top:42.6px" width="10" height="10" viewBox="0 0 10 10"><path d="M2.6 8A2.4 2.4 0 0 1 2.3 3.3A3.2 3.2 0 0 1 8.2 4.1A2 2 0 0 1 7.6 8Z" fill="none" stroke="#ea4335" stroke-width="1.2"/><path d="M2.6 8A2.4 2.4 0 0 1 1.5 4" fill="none" stroke="#34a853" stroke-width="1.2"/><path d="M5 8H7.6A2 2 0 0 0 9 6" fill="none" stroke="#4285f4" stroke-width="1.2"/><path d="M2.3 3.3A3.2 3.2 0 0 1 4.6 1.6" fill="none" stroke="#fbbc04" stroke-width="1.2"/></svg>
<svg style="position:absolute;left:388.8px;top:42.6px" width="10" height="10" viewBox="0 0 10 10"><path d="M2.6 8.4L5 2L6.4 2.6L4.2 9Z" fill="#fbbc04"/><path d="M5 2L6.4 1.6L9.2 8.3L7.6 9Z" fill="#4285f4"/><circle cx="2.6" cy="8" r="1.3" fill="#34a853"/></svg>
<svg style="position:absolute;left:405.0px;top:42.6px" width="10" height="10" viewBox="0 0 10 10"><rect x="1" y="1" width="8" height="8" rx="1.5" fill="#e8e8e8" stroke="#777" stroke-width="0.6"/><path d="M3.2 2.8V7.2M3.2 2.8L6.8 7.2M6.8 2.8V7.2" stroke="#222" stroke-width="1"/></svg>
<svg style="position:absolute;left:420.8px;top:42.6px" width="10" height="10" viewBox="0 0 10 10"><circle cx="5" cy="5" r="4.2" fill="#c6c8f5"/><circle cx="5" cy="5" r="2.6" fill="#7479c9"/><rect x="3.7" y="4.6" width="2.6" height="0.9" fill="#fff"/></svg>
<svg style="position:absolute;left:437.0px;top:42.6px" width="10" height="10" viewBox="0 0 10 10"><rect x="1" y="1" width="8" height="8" rx="1" fill="#0a66c2"/><rect x="2.3" y="4.1" width="1.2" height="3.6" fill="#fff"/><circle cx="2.9" cy="2.9" r="0.7" fill="#fff"/><path d="M4.5 7.7V4.1H5.6V4.6C5.9 4.1 6.4 4 6.8 4C7.6 4 8 4.5 8 5.4V7.7H6.9V5.6C6.9 5.1 6.7 4.9 6.3 4.9C5.9 4.9 5.6 5.2 5.6 5.7V7.7Z" fill="#fff"/></svg>
<svg style="position:absolute;left:453.0px;top:42.6px" width="10" height="10" viewBox="0 0 10 10"><rect x="0.8" y="0.8" width="8.4" height="8.4" fill="#6aab3c"/><path d="M5 2.5V6.5M3.5 5.5L5 7L6.5 5.5" fill="none" stroke="#eaffd0" stroke-width="0.7"/></svg>
<svg style="position:absolute;left:469.0px;top:42.6px" width="10" height="10" viewBox="0 0 10 10"><path d="M1 5L4 1.5H9V8.5H4Z" fill="#e0263e"/><text x="5.6" y="6.6" font-size="4" font-family="Liberation Sans" font-weight="700" fill="#fff" text-anchor="middle">ek</text></svg>
<div class="t" style="left:42.3px;top:44.30px;font-size:6.5px;line-height:7.80px;color:#d8d8d8;font-weight:700;">s</div>
<svg style="position:absolute;left:485.5px;top:43.5px" width="9" height="8" viewBox="0 0 9 8"><rect x="0.5" y="0.5" width="3" height="2.5" fill="none" stroke="#777" stroke-width="0.7"/><rect x="5" y="0.5" width="3" height="2.5" fill="none" stroke="#777" stroke-width="0.7"/><path d="M4 5L4.5 7.5L6 6" fill="none" stroke="#999" stroke-width="0.7"/></svg>
<svg style="position:absolute;left:504px;top:43px" width="6" height="9" viewBox="0 0 6 9"><path d="M4.5 0.5C1.5 1.5 1.5 7.5 4.5 8.5" fill="none" stroke="#cccccc" stroke-width="0.8"/></svg>
<div class="t" style="left:513.2px;top:44.32px;font-size:6.3px;line-height:7.56px;color:#e0e0e0;font-weight:400;">Dashboard ‹ INF</div>
<svg style="position:absolute;left:733px;top:43.5px" width="9" height="8" viewBox="0 0 9 8"><path d="M3 0L6 0L9 5.5L7.5 8L1.5 8L0 5.5Z" fill="#34a853"/><path d="M0 5.5L1.5 8L7.5 8L9 5.5Z" fill="#4285f4"/><path d="M3 0L6 0L4.5 2.6Z" fill="#fbbc04"/></svg>
<div class="t" style="left:743.7px;top:44.53px;font-size:5.95px;line-height:7.14px;color:#e0e0e0;font-weight:400;transform:scaleY(1.12);transform-origin:0 50%">web.20 - Google Sp...</div>
<svg style="position:absolute;left:808.75px;top:42.35px" width="10.5" height="10.5" viewBox="0 0 10 10"><circle cx="5" cy="5" r="4.6" fill="#f4f4f4"/><path d="M7.6 4.6H5V5.6H6.5C6.3 6.4 5.7 6.9 5 6.9C3.9 6.9 3.1 6.1 3.1 5C3.1 3.9 3.9 3.1 5 3.1C5.5 3.1 5.9 3.3 6.2 3.6L6.9 2.9C6.4 2.4 5.7 2.1 5 2.1C3.4 2.1 2.1 3.4 2.1 5C2.1 6.6 3.4 7.9 5 7.9C6.6 7.9 7.7 6.8 7.7 5.1Z" fill="#ea4335"/><path d="M2.4 6.3C2.9 7.3 3.9 7.9 5 7.9C5.9 7.9 6.7 7.5 7.2 6.9L6.4 6.3C6.1 6.7 5.6 6.9 5 6.9C4.2 6.9 3.6 6.4 3.3 5.8Z" fill="#34a853"/><path d="M7.6 4.6H5V5.6H6.5C6.4 5.9 6.3 6.1 6.2 6.2L7.1 6.9C7.5 6.4 7.7 5.8 7.7 5.1Z" fill="#4285f4"/><path d="M2.1 5C2.1 5.5 2.2 5.9 2.4 6.3L3.3 5.8C3.2 5.5 3.1 5.3 3.1 5C3.1 4.7 3.2 4.4 3.3 4.2L2.4 3.6C2.2 4 2.1 4.5 2.1 5Z" fill="#fbbc04"/></svg>
<div class="t" style="left:826.5px;top:44.88px;font-size:5.2px;line-height:6.24px;color:#3fae49;font-weight:700;">GG</div>
<div class="t" style="left:836.7px;top:44.50px;font-size:6.0px;line-height:7.20px;color:#e0e0e0;font-weight:400;transform:scaleY(1.12);transform-origin:0 50%">Word Embedding u...</div>
<div class="t" style="left:938px;top:40.70px;font-size:11px;line-height:13.20px;color:#e0e0e0;font-weight:400;">»</div>
<div style="position:absolute;left:0px;top:57px;width:960px;height:459px;background:#f0f4f9"></div>
<div style="position:absolute;left:0px;top:55.6px;width:960px;height:1.4px;background:#1e1e21"></div>
<div style="position:absolute;left:0px;top:57px;width:960px;height:1.8px;background:#fbfcfe"></div>
<svg style="position:absolute;left:13.3px;top:70px" width="9.6" height="8" viewBox="0 0 9.6 8"><path d="M0 0.5H9.6M0 3.9H9.6M0 7H9.6" stroke="#55585c" stroke-width="1.05"/></svg>
<svg style="position:absolute;left:33px;top:65px" width="19" height="18" viewBox="33 65 19 18"><rect x="44.4" y="66.7" width="5.6" height="13.8" rx="2.8" fill="#4285f4"/><rect x="40" y="71" width="5.4" height="9.5" rx="2.7" fill="#34a853"/><rect x="36.6" y="74" width="5" height="6.5" rx="2.5" fill="#ea4335"/><circle cx="38.4" cy="77.6" r="2.7" fill="#fbbc04"/><path d="M36.8 79.4L34.4 81.9" stroke="#fbbc04" stroke-width="1.4" stroke-linecap="round"/></svg>
<div class="t" style="left:55.5px;top:68.44px;font-size:10.6px;line-height:12.72px;color:#55585c;font-weight:400;transform:scaleY(1.08);transform-origin:0 50%;-webkit-text-stroke:0.12px #55585c">Google Search Console</div>
<div style="position:absolute;left:4.2px;top:96.4px;width:127.5px;height:19.8px;border:0.8px solid #c4c7c5;border-radius:10px;box-sizing:border-box"></div>
<div style="position:absolute;left:12.8px;top:101px;width:11px;height:10.7px;background:#ffffff;border-radius:1.5px"></div>
<svg style="position:absolute;left:14px;top:102.5px" width="8.6" height="8" viewBox="0 0 10 9.3"><path d="M0.6 8.6L2.6 0.6H5L4 4.6L6.6 0.6H9.4L7.4 8.6H5L6 4.6L3.4 8.6Z" fill="#3a8ef6"/><path d="M0.6 8.6L2.6 0.6H3.6L1.8 8.6Z" fill="#7cc0ff"/><path d="M5 8.6L6 4.6L7.4 8.6Z" fill="#1d4fc4"/></svg>
<div class="t" style="left:30.8px;top:103.16px;font-size:7.4px;line-height:8.88px;color:#1f1f1f;font-weight:400;-webkit-text-stroke:0.25px #1f1f1f">nxtgg.com</div>
<svg style="position:absolute;left:116.5px;top:104.8px" width="6" height="3.5" viewBox="0 0 6 3.5"><path d="M0 0H6L3 3.5Z" fill="#444746"/></svg>
<div style="position:absolute;left:190.8px;top:61.2px;width:360.5px;height:24px;background:#e0e8f6;border-radius:12px"></div>
<svg style="position:absolute;left:200.5px;top:68.5px" width="9.5" height="9.5" viewBox="0 0 10 10"><circle cx="4" cy="4" r="3.1" fill="none" stroke="#444746" stroke-width="1.1"/><path d="M6.3 6.3L9.3 9.3" stroke="#444746" stroke-width="1.2"/></svg>
<div class="t" style="left:220px;top:68.73px;font-size:7.95px;line-height:9.54px;color:#6f7276;font-weight:400;">Periksa semua URL di "nxtgg.com"</div>
<svg style="position:absolute;left:828.5px;top:68.5px" width="11" height="11" viewBox="0 0 11 11"><circle cx="5.5" cy="5.5" r="4.8" fill="none" stroke="#444746" stroke-width="1"/><path d="M3.9 4.2C3.9 3.2 4.6 2.6 5.5 2.6C6.4 2.6 7.1 3.2 7.1 4C7.1 5 5.6 5.2 5.6 6.5" fill="none" stroke="#444746" stroke-width="1"/><circle cx="5.6" cy="8.1" r="0.6" fill="#444746"/></svg>
<svg style="position:absolute;left:852.5px;top:68.5px" width="11" height="11" viewBox="0 0 11 11"><circle cx="4" cy="3" r="2" fill="none" stroke="#444746" stroke-width="0.95"/><path d="M0.6 9.6C0.6 7.5 2.2 6.4 4 6.4C4.7 6.4 5.2 6.5 5.6 6.7" fill="none" stroke="#444746" stroke-width="0.95"/><path d="M0.6 9.6H4.6" stroke="#444746" stroke-width="0.95"/><circle cx="8.3" cy="8.2" r="1.35" fill="none" stroke="#444746" stroke-width="0.9"/><path d="M8.3 6V6.7M8.3 9.7V10.4M6.1 8.2H6.8M9.8 8.2H10.5M6.75 6.65L7.25 7.15M9.35 9.25L9.85 9.75M6.75 9.75L7.25 9.25M9.35 7.15L9.85 6.65" stroke="#444746" stroke-width="0.8"/></svg>
<svg style="position:absolute;left:877.5px;top:68.5px" width="9" height="11" viewBox="0 0 9 11"><path d="M1 8.3V5C1 2.8 2.5 1.5 4.5 1.5C6.5 1.5 8 2.8 8 5V8.3M0.3 8.5H8.7" fill="none" stroke="#444746" stroke-width="1"/><path d="M3.5 9.6H5.5" stroke="#444746" stroke-width="1"/></svg>
<div style="position:absolute;left:882px;top:65.5px;width:7.5px;height:7.5px;border-radius:50%;background:#d93025;color:#fff;font:bold 5px/7.5px 'Liberation Sans';text-align:center">9</div>
<svg style="position:absolute;left:915px;top:70px" width="8" height="8" viewBox="0 0 8 8"><g fill="#444746"><circle cx="1" cy="1" r="0.95"/><circle cx="1" cy="4" r="0.95"/><circle cx="1" cy="7" r="0.95"/><circle cx="4" cy="1" r="0.95"/><circle cx="4" cy="4" r="0.95"/><circle cx="4" cy="7" r="0.95"/><circle cx="7" cy="1" r="0.95"/><circle cx="7" cy="4" r="0.95"/><circle cx="7" cy="7" r="0.95"/></g></svg>
<svg style="position:absolute;left:933px;top:63.5px" width="21" height="21" viewBox="0 0 21 21"><g fill="none" stroke-width="1.3"><path d="M2.19 5.7A9.6 9.6 0 0 1 15.3 2.19" stroke="#ea4335"/><path d="M15.3 2.19A9.6 9.6 0 0 1 15.3 18.81" stroke="#4285f4"/><path d="M15.3 18.81A9.6 9.6 0 0 1 2.19 15.3" stroke="#34a853"/><path d="M2.19 15.3A9.6 9.6 0 0 1 2.19 5.7" stroke="#fbbc04"/></g><defs><radialGradient id="av" cx="0.42" cy="0.55" r="0.6"><stop offset="0" stop-color="#7a736a"/><stop offset="0.3" stop-color="#3e3a36"/><stop offset="0.7" stop-color="#232325"/><stop offset="1" stop-color="#121214"/></radialGradient></defs><circle cx="10.5" cy="10.5" r="8" fill="url(#av)"/><path d="M6 12C8 9.5 10 10 12.5 8.5C11.5 11 9.5 12.5 6 12Z" fill="#c9c1b4" opacity=".7"/></svg>
<div class="t" style="left:193.5px;top:100.84px;font-size:10.1px;line-height:12.12px;color:#2a2b2e;font-weight:400;transform:scaleY(1.12);transform-origin:0 50%;-webkit-text-stroke:0.2px #2a2b2e">Pengindeksan halaman</div>
<svg style="position:absolute;left:902.5px;top:101px" width="8" height="9" viewBox="0 0 8 9"><path d="M4 0.3V5.5M1.5 3.3L4 5.8L6.5 3.3" fill="none" stroke="#444746" stroke-width="1.4"/><path d="M0.5 8.3H7.5" stroke="#444746" stroke-width="1.2"/></svg>
<div class="t" style="left:916.3px;top:101.91px;font-size:6.65px;line-height:7.98px;color:#444746;font-weight:400;-webkit-text-stroke:0.3px #444746">EKSPOR</div>
<div style="position:absolute;left:191.5px;top:121.2px;width:768.5px;height:0.8px;background:#d3d6da"></div>
<div class="t" style="left:193.5px;top:134.46px;font-size:7.4px;line-height:8.88px;color:#a7aaae;font-weight:400;transform:scaleY(1.1);transform-origin:0 50%">Semua halaman yang diketahui</div>
<svg style="position:absolute;left:311.3px;top:136.8px" width="6" height="3.5" viewBox="0 0 6 3.5"><path d="M0 0H6L3 3.5Z" fill="#80868b"/></svg>
<div class="t" style="right:19.600000000000023px;top:132.94px;font-size:7.6px;line-height:9.12px;color:#6f7276;font-weight:400;">Terakhir diperbarui: <span style="color:#1f1f1f;-webkit-text-stroke:0.25px #1f1f1f">29/07/25</span></div>
<div style="position:absolute;left:952.5px;top:122.5px;width:7.5px;height:393.5px;background:#fafafa"></div>
<svg style="position:absolute;left:953.5px;top:124px" width="5" height="3.5" viewBox="0 0 5 3.5"><path d="M0 3.5L2.5 0L5 3.5Z" fill="#7a7a7a"/></svg>
<div style="position:absolute;left:953.8px;top:130px;width:4.6px;height:197px;background:#8a8a8a;border-radius:2.3px"></div>
<svg style="position:absolute;left:953.5px;top:510px" width="5" height="3.5" viewBox="0 0 5 3.5"><path d="M0 0L5 0L2.5 3.5Z" fill="#7a7a7a"/></svg>
<div style="position:absolute;left:0px;top:232.8px;width:132.2px;height:20px;background:#c2e7ff;border-radius:0 10px 10px 0"></div>
<div class="t" style="left:29.8px;top:132.09px;font-size:7.35px;line-height:8.82px;color:#3c3f42;font-weight:400;-webkit-text-stroke:0.15px #3c3f42">Sekilas</div>
<svg style="position:absolute;left:13.5px;top:131.4px" width="9" height="8" viewBox="0 0 9 8"><path d="M4.5 0.2L9 4H7.6V8H5.4V5.4H3.6V8H1.4V4H0Z" fill="#444746"/></svg>
<div class="t" style="left:29.8px;top:151.94px;font-size:7.35px;line-height:8.82px;color:#3c3f42;font-weight:400;-webkit-text-stroke:0.15px #3c3f42;letter-spacing:0.15px">Insight</div>
<svg style="position:absolute;left:14.5px;top:150.5px" width="7" height="10" viewBox="0 0 7 10"><path d="M3.5 0.6C5.1 0.6 6.4 1.9 6.4 3.5C6.4 4.6 5.8 5.4 5 6V7.2H2V6C1.2 5.4 0.6 4.6 0.6 3.5C0.6 1.9 1.9 0.6 3.5 0.6Z" fill="none" stroke="#444746" stroke-width="1.12"/><path d="M2.2 8.8H4.8" stroke="#444746" stroke-width="1.12"/></svg>
<div style="position:absolute;left:57px;top:151.4px;width:16.4px;height:7.8px;background:#0a4bbf;border-radius:2.2px"></div>
<div class="t" style="left:59.3px;top:152.22px;font-size:5.3px;line-height:6.36px;color:#b8d4ff;font-weight:700;">Baru</div>
<div class="t" style="left:29.8px;top:171.68px;font-size:7.35px;line-height:8.82px;color:#3c3f42;font-weight:400;-webkit-text-stroke:0.15px #3c3f42">Performa</div>
<svg style="position:absolute;left:13.5px;top:171.8px" width="9" height="6" viewBox="0 0 9 6"><path d="M0.4 5.5L3 2.8L4.8 4.4L8.4 0.8M6.2 0.6H8.6V3" fill="none" stroke="#444746" stroke-width="1.25"/></svg>
<div class="t" style="left:29.8px;top:191.93px;font-size:7.35px;line-height:8.82px;color:#3c3f42;font-weight:400;-webkit-text-stroke:0.15px #3c3f42">Inspeksi URL</div>
<svg style="position:absolute;left:13.5px;top:191.1px" width="9" height="9" viewBox="0 0 9 9"><circle cx="3.6" cy="3.6" r="2.8" fill="none" stroke="#444746" stroke-width="1.25"/><path d="M5.6 5.6L8.6 8.6" stroke="#444746" stroke-width="1.38"/></svg>
<div style="position:absolute;left:8.3px;top:209.0px;width:118px;height:0.8px;background:#d3d6da"></div>
<svg style="position:absolute;left:10.8px;top:221.89999999999998px" width="4" height="2.6" viewBox="0 0 4 2.6"><path d="M0 0H4L2 2.6Z" fill="#444746"/></svg>
<div class="t" style="left:20px;top:220.23px;font-size:7.4px;line-height:8.88px;color:#444746;font-weight:400;-webkit-text-stroke:0.12px #444746">Penyusunan indeks</div>
<div class="t" style="left:29.8px;top:239.90px;font-size:7.35px;line-height:8.82px;color:#1f1f1f;font-weight:400;-webkit-text-stroke:0.32px #1f1f1f">Halaman</div>
<svg style="position:absolute;left:13.5px;top:237.9px" width="9" height="10" viewBox="0 0 9 10"><path d="M0.6 7V0.6H5" fill="none" stroke="#1f1f1f" stroke-width="1.25"/><path d="M2.4 2.4H6L8.2 4.6V9.4H2.4Z" fill="none" stroke="#1f1f1f" stroke-width="1.25"/></svg>
<div class="t" style="left:29.8px;top:259.15px;font-size:7.35px;line-height:8.82px;color:#3c3f42;font-weight:400;-webkit-text-stroke:0.15px #3c3f42;letter-spacing:0.1px">Peta Situs</div>
<svg style="position:absolute;left:13.5px;top:258.0px" width="9" height="10" viewBox="0 0 9 10"><rect x="0.5" y="0.5" width="3" height="2.6" fill="none" stroke="#444746" stroke-width="1.00"/><rect x="4.8" y="4" width="3" height="2.2" fill="none" stroke="#444746" stroke-width="1.00"/><rect x="4.8" y="7.2" width="3" height="2.2" fill="none" stroke="#444746" stroke-width="1.00"/><path d="M2 3.1V8.3H4.8M2 5.1H4.8" fill="none" stroke="#444746" stroke-width="1.00"/></svg>
<div class="t" style="left:29.8px;top:279.30px;font-size:7.35px;line-height:8.82px;color:#3c3f42;font-weight:400;-webkit-text-stroke:0.15px #3c3f42;letter-spacing:0.1px">Penghapusan</div>
<svg style="position:absolute;left:13.5px;top:279.2px" width="10" height="8" viewBox="0 0 10 8"><path d="M0.5 4C1.6 2 3.2 1 5 1C6.8 1 8.4 2 9.5 4C8.4 6 6.8 7 5 7C3.2 7 1.6 6 0.5 4Z" fill="none" stroke="#444746" stroke-width="1.25"/><circle cx="5" cy="4" r="1.4" fill="#444746"/><path d="M1.5 0.5L8.5 7.5" stroke="#444746" stroke-width="1.25"/></svg>
<div style="position:absolute;left:8.3px;top:297.0px;width:118px;height:0.8px;background:#d3d6da"></div>
<svg style="position:absolute;left:10.8px;top:309.09999999999997px" width="4" height="2.6" viewBox="0 0 4 2.6"><path d="M0 0H4L2 2.6Z" fill="#444746"/></svg>
<div class="t" style="left:20px;top:306.99px;font-size:7.4px;line-height:8.88px;color:#444746;font-weight:400;-webkit-text-stroke:0.12px #444746">Pengalaman</div>
<div class="t" style="left:29.8px;top:326.97px;font-size:7.35px;line-height:8.82px;color:#3c3f42;font-weight:400;-webkit-text-stroke:0.15px #3c3f42;letter-spacing:0.12px">Data Web Inti</div>
<svg style="position:absolute;left:13.5px;top:326.4px" width="10" height="8" viewBox="0 0 10 8"><path d="M1.4 7.2A4.2 4.2 0 1 1 8.6 7.2Z" fill="none" stroke="#444746" stroke-width="1.19"/><path d="M5 5L6.8 2.8" stroke="#444746" stroke-width="1.25"/></svg>
<div class="t" style="left:29.8px;top:346.82px;font-size:7.35px;line-height:8.82px;color:#3c3f42;font-weight:400;-webkit-text-stroke:0.15px #3c3f42;letter-spacing:-0.25px">HTTPS</div>
<svg style="position:absolute;left:14.5px;top:345.3px" width="8" height="10" viewBox="0 0 8 10"><path d="M2 4V2.6C2 1.4 2.9 0.6 4 0.6C5.1 0.6 6 1.4 6 2.6V4" fill="none" stroke="#444746" stroke-width="1.19"/><rect x="0.6" y="4" width="6.8" height="5.4" rx="0.6" fill="none" stroke="#444746" stroke-width="1.19"/><circle cx="4" cy="6.7" r="0.8" fill="#444746"/></svg>
<div style="position:absolute;left:8.3px;top:363.6px;width:118px;height:0.8px;background:#d3d6da"></div>
<svg style="position:absolute;left:10.8px;top:376.5px" width="4" height="2.6" viewBox="0 0 4 2.6"><path d="M0 0H4L2 2.6Z" fill="#444746"/></svg>
<div class="t" style="left:20px;top:373.91px;font-size:7.4px;line-height:8.88px;color:#444746;font-weight:400;-webkit-text-stroke:0.12px #444746">Belanja</div>
<div class="t" style="left:29.8px;top:394.09px;font-size:7.35px;line-height:8.82px;color:#3c3f42;font-weight:400;-webkit-text-stroke:0.15px #3c3f42;letter-spacing:0.1px">Cuplikan produk</div>
<svg style="position:absolute;left:13.5px;top:393.6px" width="9" height="9" viewBox="0 0 9 9"><path d="M4.5 0.6L8.3 3.3L4.5 6L0.7 3.3Z" fill="none" stroke="#444746" stroke-width="1.12"/><path d="M0.7 5.3L4.5 8L8.3 5.3" fill="none" stroke="#444746" stroke-width="1.12"/></svg>
<div class="t" style="left:29.8px;top:414.24px;font-size:7.35px;line-height:8.82px;color:#3c3f42;font-weight:400;-webkit-text-stroke:0.15px #3c3f42;letter-spacing:0.19px">Listingan penjual</div>
<svg style="position:absolute;left:13.5px;top:413.6px" width="9" height="9" viewBox="0 0 9 9"><path d="M4.5 0.6L8.3 3.3L4.5 6L0.7 3.3Z" fill="none" stroke="#444746" stroke-width="1.12"/><path d="M0.7 5.3L4.5 8L8.3 5.3" fill="none" stroke="#444746" stroke-width="1.12"/></svg>
<div style="position:absolute;left:8.3px;top:432.0px;width:118px;height:0.8px;background:#d3d6da"></div>
<svg style="position:absolute;left:10.8px;top:444.0px" width="4" height="2.6" viewBox="0 0 4 2.6"><path d="M0 0H4L2 2.6Z" fill="#444746"/></svg>
<div class="t" style="left:20px;top:441.93px;font-size:7.4px;line-height:8.88px;color:#444746;font-weight:400;-webkit-text-stroke:0.12px #444746;letter-spacing:0.07px">Penyempurnaan</div>
<div class="t" style="left:29.8px;top:462.01px;font-size:7.35px;line-height:8.82px;color:#3c3f42;font-weight:400;-webkit-text-stroke:0.15px #3c3f42;letter-spacing:0.06px">Cuplikan ulasan</div>
<svg style="position:absolute;left:13.5px;top:461.1px" width="9" height="9" viewBox="0 0 9 9"><path d="M4.5 0.6L8.3 3.3L4.5 6L0.7 3.3Z" fill="none" stroke="#444746" stroke-width="1.12"/><path d="M0.7 5.3L4.5 8L8.3 5.3" fill="none" stroke="#444746" stroke-width="1.12"/></svg>
<div class="t" style="left:29.8px;top:481.86px;font-size:7.35px;line-height:8.82px;color:#3c3f42;font-weight:400;-webkit-text-stroke:0.15px #3c3f42;letter-spacing:0.25px">Data terstruktur tidak d...</div>
<svg style="position:absolute;left:13.5px;top:481.0px" width="9" height="9" viewBox="0 0 9 9"><path d="M4.5 0.6L8.3 3.3L4.5 6L0.7 3.3Z" fill="none" stroke="#444746" stroke-width="1.12"/><path d="M0.7 5.3L4.5 8L8.3 5.3" fill="none" stroke="#444746" stroke-width="1.12"/></svg>
<div style="position:absolute;left:8.3px;top:500.1px;width:118px;height:0.8px;background:#d3d6da"></div>
<svg style="position:absolute;left:11.5px;top:510.70000000000005px" width="2.6" height="4" viewBox="0 0 2.6 4"><path d="M0 0V4L2.6 2Z" fill="#444746"/></svg>
<div class="t" style="left:20px;top:509.36px;font-size:7.4px;line-height:8.88px;color:#444746;font-weight:400;-webkit-text-stroke:0.12px #444746">Tindakan Manual &amp; Keamanan</div>
<div style="position:absolute;left:338px;top:165.8px;width:456px;height:272px;background:#ffffff;border-radius:12px"></div>
<div style="position:absolute;left:338px;top:165.8px;width:90px;height:64.2px;background:#9e9e9e;border-radius:12px 0 0 0"></div>
<div style="position:absolute;left:428px;top:165.8px;width:90px;height:64.2px;background:#169b58"></div>
<svg style="position:absolute;left:349.8px;top:178.9px" width="7" height="7" viewBox="0 0 7 7"><rect x="0.45" y="0.45" width="6.1" height="6.1" rx="0.6" fill="none" stroke="#ffffff" stroke-width="0.9"/><path d="M1.6 3.5L2.9 4.8L5.4 2.2" fill="none" stroke="#ffffff" stroke-width="0.9"/></svg>
<div class="t" style="left:359.8px;top:178.30px;font-size:6.5px;line-height:7.80px;color:#ffffff;font-weight:400;-webkit-text-stroke:0.15px #fff">Tidak diindeks</div>
<div class="t" style="left:349.5px;top:190.92px;font-size:16.3px;line-height:19.56px;color:#ffffff;font-weight:400;">275</div>
<div class="t" style="left:350px;top:210.06px;font-size:6.4px;line-height:7.68px;color:#ffffff;font-weight:400;-webkit-text-stroke:0.15px #fff">8 alasan</div>
<svg style="position:absolute;left:413.5px;top:215.7px" width="8" height="8" viewBox="0 0 8 8"><circle cx="4" cy="4" r="3.5" fill="none" stroke="rgba(255,255,255,.6)" stroke-width="0.8"/><path d="M2.9 3C2.9 2.3 3.4 1.9 4 1.9C4.6 1.9 5.1 2.3 5.1 2.9C5.1 3.6 4 3.7 4 4.7" fill="none" stroke="rgba(255,255,255,.6)" stroke-width="0.8"/><circle cx="4" cy="5.9" r="0.45" fill="rgba(255,255,255,.6)"/></svg>
<svg style="position:absolute;left:439.8px;top:178.9px" width="7" height="7" viewBox="0 0 7 7"><rect x="0.45" y="0.45" width="6.1" height="6.1" rx="0.6" fill="none" stroke="#ffffff" stroke-width="0.9"/><path d="M1.6 3.5L2.9 4.8L5.4 2.2" fill="none" stroke="#ffffff" stroke-width="0.9"/></svg>
<div class="t" style="left:449.8px;top:178.30px;font-size:6.5px;line-height:7.80px;color:#ffffff;font-weight:400;-webkit-text-stroke:0.15px #fff">Terindeks</div>
<div class="t" style="left:439.7px;top:190.92px;font-size:16.3px;line-height:19.56px;color:#ffffff;font-weight:400;">973</div>
<svg style="position:absolute;left:503.5px;top:215.7px" width="8" height="8" viewBox="0 0 8 8"><circle cx="4" cy="4" r="3.5" fill="none" stroke="rgba(255,255,255,.6)" stroke-width="0.8"/><path d="M2.9 3C2.9 2.3 3.4 1.9 4 1.9C4.6 1.9 5.1 2.3 5.1 2.9C5.1 3.6 4 3.7 4 4.7" fill="none" stroke="rgba(255,255,255,.6)" stroke-width="0.8"/><circle cx="4" cy="5.9" r="0.45" fill="rgba(255,255,255,.6)"/></svg>
<div style="position:absolute;left:346.3px;top:238px;width:9.7px;height:9.7px;border:1.1px solid #5f6368;border-radius:1.2px;box-sizing:border-box"></div>
<div class="t" style="left:361.2px;top:238.90px;font-size:7.33px;line-height:8.80px;color:#1f1f1f;font-weight:400;-webkit-text-stroke:0.1px #1f1f1f">Tayangan</div>
<div class="t" style="left:345.6px;top:259.74px;font-size:6.1px;line-height:7.32px;color:#5f6368;font-weight:400;">Halaman</div>
<div class="t" style="right:596px;top:267.78px;font-size:6.2px;line-height:7.44px;color:#5f6368;font-weight:400;">1,5 rb</div>
<div class="t" style="right:596px;top:292.88px;font-size:6.2px;line-height:7.44px;color:#5f6368;font-weight:400;">1 rb</div>
<div class="t" style="right:596px;top:317.48px;font-size:6.2px;line-height:7.44px;color:#5f6368;font-weight:400;">500</div>
<div class="t" style="right:596px;top:341.98px;font-size:6.2px;line-height:7.44px;color:#5f6368;font-weight:400;">0</div>
<svg style="position:absolute;left:0;top:0" width="960" height="540" viewBox="0 0 960 540"><rect x="367" y="271.15" width="409" height="0.7" fill="#e8eaed"/><rect x="367" y="296.15" width="409" height="0.7" fill="#e8eaed"/><rect x="367" y="320.95" width="409" height="0.7" fill="#e8eaed"/><rect x="367" y="345.3" width="409" height="0.8" fill="#bdc1c6"/><rect x="372.90" y="341.20" width="4.38" height="4.10" fill="#bdbdbd"/><rect x="372.90" y="335.30" width="4.38" height="5.40" fill="#179d5a"/><rect x="377.57" y="341.20" width="4.38" height="4.10" fill="#bdbdbd"/><rect x="377.57" y="335.30" width="4.38" height="5.40" fill="#179d5a"/><rect x="382.25" y="341.20" width="4.38" height="4.10" fill="#bdbdbd"/><rect x="382.25" y="335.30" width="4.38" height="5.40" fill="#179d5a"/><rect x="386.92" y="341.20" width="4.38" height="4.10" fill="#bdbdbd"/><rect x="386.92" y="335.30" width="4.38" height="5.40" fill="#179d5a"/><rect x="391.60" y="341.20" width="4.38" height="4.10" fill="#bdbdbd"/><rect x="391.60" y="335.30" width="4.38" height="5.40" fill="#179d5a"/><rect x="396.27" y="341.20" width="4.38" height="4.10" fill="#bdbdbd"/><rect x="396.27" y="335.30" width="4.38" height="5.40" fill="#179d5a"/><rect x="400.95" y="341.20" width="4.38" height="4.10" fill="#bdbdbd"/><rect x="400.95" y="335.30" width="4.38" height="5.40" fill="#179d5a"/><rect x="405.62" y="341.20" width="4.38" height="4.10" fill="#bdbdbd"/><rect x="405.62" y="335.30" width="4.38" height="5.40" fill="#179d5a"/><rect x="410.30" y="341.20" width="4.38" height="4.10" fill="#bdbdbd"/><rect x="410.30" y="335.30" width="4.38" height="5.40" fill="#179d5a"/><rect x="414.97" y="341.20" width="4.38" height="4.10" fill="#bdbdbd"/><rect x="414.97" y="335.30" width="4.38" height="5.40" fill="#179d5a"/><rect x="419.65" y="341.20" width="4.38" height="4.10" fill="#bdbdbd"/><rect x="419.65" y="335.30" width="4.38" height="5.40" fill="#179d5a"/><rect x="424.32" y="341.20" width="4.38" height="4.10" fill="#bdbdbd"/><rect x="424.32" y="335.30" width="4.38" height="5.40" fill="#179d5a"/><rect x="429.00" y="341.20" width="4.38" height="4.10" fill="#bdbdbd"/><rect x="429.00" y="335.30" width="4.38" height="5.40" fill="#179d5a"/><rect x="433.67" y="341.20" width="4.38" height="4.10" fill="#bdbdbd"/><rect x="433.67" y="335.30" width="4.38" height="5.40" fill="#179d5a"/><rect x="438.35" y="341.20" width="4.38" height="4.10" fill="#bdbdbd"/><rect x="438.35" y="335.30" width="4.38" height="5.40" fill="#179d5a"/><rect x="443.02" y="340.60" width="4.38" height="4.70" fill="#bdbdbd"/><rect x="443.02" y="335.30" width="4.38" height="4.80" fill="#179d5a"/><rect x="447.70" y="340.60" width="4.38" height="4.70" fill="#bdbdbd"/><rect x="447.70" y="335.30" width="4.38" height="4.80" fill="#179d5a"/><rect x="452.38" y="340.60" width="4.38" height="4.70" fill="#bdbdbd"/><rect x="452.38" y="335.30" width="4.38" height="4.80" fill="#179d5a"/><rect x="457.05" y="340.60" width="4.38" height="4.70" fill="#bdbdbd"/><rect x="457.05" y="335.30" width="4.38" height="4.80" fill="#179d5a"/><rect x="461.72" y="340.60" width="4.38" height="4.70" fill="#bdbdbd"/><rect x="461.72" y="335.30" width="4.38" height="4.80" fill="#179d5a"/><rect x="466.40" y="340.60" width="4.38" height="4.70" fill="#bdbdbd"/><rect x="466.40" y="335.30" width="4.38" height="4.80" fill="#179d5a"/><rect x="471.07" y="340.60" width="4.38" height="4.70" fill="#bdbdbd"/><rect x="471.07" y="335.30" width="4.38" height="4.80" fill="#179d5a"/><rect x="475.75" y="338.10" width="4.38" height="7.20" fill="#bdbdbd"/><rect x="475.75" y="335.25" width="4.38" height="2.35" fill="#179d5a"/><rect x="480.42" y="338.10" width="4.38" height="7.20" fill="#bdbdbd"/><rect x="480.42" y="335.25" width="4.38" height="2.35" fill="#179d5a"/><rect x="485.10" y="338.10" width="4.38" height="7.20" fill="#bdbdbd"/><rect x="485.10" y="335.25" width="4.38" height="2.35" fill="#179d5a"/><rect x="489.77" y="338.10" width="4.38" height="7.20" fill="#bdbdbd"/><rect x="489.77" y="335.25" width="4.38" height="2.35" fill="#179d5a"/><rect x="494.45" y="338.00" width="4.38" height="7.30" fill="#bdbdbd"/><rect x="494.45" y="335.25" width="4.38" height="2.25" fill="#179d5a"/><rect x="499.12" y="338.00" width="4.38" height="7.30" fill="#bdbdbd"/><rect x="499.12" y="335.25" width="4.38" height="2.25" fill="#179d5a"/><rect x="503.80" y="338.00" width="4.38" height="7.30" fill="#bdbdbd"/><rect x="503.80" y="335.25" width="4.38" height="2.25" fill="#179d5a"/><rect x="508.47" y="338.00" width="4.38" height="7.30" fill="#bdbdbd"/><rect x="508.47" y="335.25" width="4.38" height="2.25" fill="#179d5a"/><rect x="513.15" y="338.00" width="4.38" height="7.30" fill="#bdbdbd"/><rect x="513.15" y="335.25" width="4.38" height="2.25" fill="#179d5a"/><rect x="517.82" y="338.00" width="4.38" height="7.30" fill="#bdbdbd"/><rect x="517.82" y="335.25" width="4.38" height="2.25" fill="#179d5a"/><rect x="522.50" y="338.00" width="4.38" height="7.30" fill="#bdbdbd"/><rect x="522.50" y="335.25" width="4.38" height="2.25" fill="#179d5a"/><rect x="527.17" y="338.00" width="4.38" height="7.30" fill="#bdbdbd"/><rect x="527.17" y="335.25" width="4.38" height="2.25" fill="#179d5a"/><rect x="531.85" y="338.00" width="4.38" height="7.30" fill="#bdbdbd"/><rect x="531.85" y="335.25" width="4.38" height="2.25" fill="#179d5a"/><rect x="536.52" y="338.00" width="4.38" height="7.30" fill="#bdbdbd"/><rect x="536.52" y="335.25" width="4.38" height="2.25" fill="#179d5a"/><rect x="541.20" y="338.00" width="4.38" height="7.30" fill="#bdbdbd"/><rect x="541.20" y="335.25" width="4.38" height="2.25" fill="#179d5a"/><rect x="545.88" y="338.00" width="4.38" height="7.30" fill="#bdbdbd"/><rect x="545.88" y="335.25" width="4.38" height="2.25" fill="#179d5a"/><rect x="550.55" y="338.00" width="4.38" height="7.30" fill="#bdbdbd"/><rect x="550.55" y="335.25" width="4.38" height="2.25" fill="#179d5a"/><rect x="555.22" y="338.00" width="4.38" height="7.30" fill="#bdbdbd"/><rect x="555.22" y="335.25" width="4.38" height="2.25" fill="#179d5a"/><rect x="559.90" y="338.00" width="4.38" height="7.30" fill="#bdbdbd"/><rect x="559.90" y="335.25" width="4.38" height="2.25" fill="#179d5a"/><rect x="564.57" y="338.00" width="4.38" height="7.30" fill="#bdbdbd"/><rect x="564.57" y="335.25" width="4.38" height="2.25" fill="#179d5a"/><rect x="569.25" y="338.00" width="4.38" height="7.30" fill="#bdbdbd"/><rect x="569.25" y="335.25" width="4.38" height="2.25" fill="#179d5a"/><rect x="573.92" y="338.80" width="4.38" height="6.50" fill="#bdbdbd"/><rect x="573.92" y="335.00" width="4.38" height="3.30" fill="#179d5a"/><rect x="578.60" y="338.70" width="4.38" height="6.60" fill="#bdbdbd"/><rect x="578.60" y="335.00" width="4.38" height="3.20" fill="#179d5a"/><rect x="583.27" y="338.70" width="4.38" height="6.60" fill="#bdbdbd"/><rect x="583.27" y="335.00" width="4.38" height="3.20" fill="#179d5a"/><rect x="587.95" y="338.70" width="4.38" height="6.60" fill="#bdbdbd"/><rect x="587.95" y="335.00" width="4.38" height="3.20" fill="#179d5a"/><rect x="592.62" y="338.70" width="4.38" height="6.60" fill="#bdbdbd"/><rect x="592.62" y="335.00" width="4.38" height="3.20" fill="#179d5a"/><rect x="597.30" y="338.70" width="4.38" height="6.60" fill="#bdbdbd"/><rect x="597.30" y="335.00" width="4.38" height="3.20" fill="#179d5a"/><rect x="601.97" y="338.70" width="4.38" height="6.60" fill="#bdbdbd"/><rect x="601.97" y="335.00" width="4.38" height="3.20" fill="#179d5a"/><rect x="606.65" y="338.70" width="4.38" height="6.60" fill="#bdbdbd"/><rect x="606.65" y="335.00" width="4.38" height="3.20" fill="#179d5a"/><rect x="611.32" y="338.70" width="4.38" height="6.60" fill="#bdbdbd"/><rect x="611.32" y="335.00" width="4.38" height="3.20" fill="#179d5a"/><rect x="616.00" y="338.70" width="4.38" height="6.60" fill="#bdbdbd"/><rect x="616.00" y="335.00" width="4.38" height="3.20" fill="#179d5a"/><rect x="620.67" y="338.70" width="4.38" height="6.60" fill="#bdbdbd"/><rect x="620.67" y="335.00" width="4.38" height="3.20" fill="#179d5a"/><rect x="625.35" y="338.70" width="4.38" height="6.60" fill="#bdbdbd"/><rect x="625.35" y="334.00" width="4.38" height="4.20" fill="#179d5a"/><rect x="630.02" y="338.70" width="4.38" height="6.60" fill="#bdbdbd"/><rect x="630.02" y="334.00" width="4.38" height="4.20" fill="#179d5a"/><rect x="634.70" y="338.70" width="4.38" height="6.60" fill="#bdbdbd"/><rect x="634.70" y="334.00" width="4.38" height="4.20" fill="#179d5a"/><rect x="639.38" y="338.20" width="4.38" height="7.10" fill="#bdbdbd"/><rect x="639.38" y="334.00" width="4.38" height="3.70" fill="#179d5a"/><rect x="644.05" y="338.20" width="4.38" height="7.10" fill="#bdbdbd"/><rect x="644.05" y="334.00" width="4.38" height="3.70" fill="#179d5a"/><rect x="648.72" y="338.20" width="4.38" height="7.10" fill="#bdbdbd"/><rect x="648.72" y="334.00" width="4.38" height="3.70" fill="#179d5a"/><rect x="653.40" y="338.20" width="4.38" height="7.10" fill="#bdbdbd"/><rect x="653.40" y="334.00" width="4.38" height="3.70" fill="#179d5a"/><rect x="658.08" y="338.20" width="4.38" height="7.10" fill="#bdbdbd"/><rect x="658.08" y="334.00" width="4.38" height="3.70" fill="#179d5a"/><rect x="662.75" y="338.20" width="4.38" height="7.10" fill="#bdbdbd"/><rect x="662.75" y="334.00" width="4.38" height="3.70" fill="#179d5a"/><rect x="667.42" y="338.20" width="4.38" height="7.10" fill="#bdbdbd"/><rect x="667.42" y="334.00" width="4.38" height="3.70" fill="#179d5a"/><rect x="672.10" y="337.80" width="4.38" height="7.50" fill="#bdbdbd"/><rect x="672.10" y="331.70" width="4.38" height="5.60" fill="#179d5a"/><rect x="676.77" y="337.80" width="4.38" height="7.50" fill="#bdbdbd"/><rect x="676.77" y="331.70" width="4.38" height="5.60" fill="#179d5a"/><rect x="681.45" y="337.80" width="4.38" height="7.50" fill="#bdbdbd"/><rect x="681.45" y="331.70" width="4.38" height="5.60" fill="#179d5a"/><rect x="686.12" y="337.80" width="4.38" height="7.50" fill="#bdbdbd"/><rect x="686.12" y="331.70" width="4.38" height="5.60" fill="#179d5a"/><rect x="690.80" y="337.80" width="4.38" height="7.50" fill="#bdbdbd"/><rect x="690.80" y="331.70" width="4.38" height="5.60" fill="#179d5a"/><rect x="695.47" y="337.80" width="4.38" height="7.50" fill="#bdbdbd"/><rect x="695.47" y="331.70" width="4.38" height="5.60" fill="#179d5a"/><rect x="700.15" y="337.80" width="4.38" height="7.50" fill="#bdbdbd"/><rect x="700.15" y="331.70" width="4.38" height="5.60" fill="#179d5a"/><rect x="704.83" y="336.70" width="4.38" height="8.60" fill="#bdbdbd"/><rect x="704.83" y="325.80" width="4.38" height="10.40" fill="#179d5a"/><rect x="709.50" y="336.70" width="4.38" height="8.60" fill="#bdbdbd"/><rect x="709.50" y="325.80" width="4.38" height="10.40" fill="#179d5a"/><rect x="714.17" y="336.70" width="4.38" height="8.60" fill="#bdbdbd"/><rect x="714.17" y="325.80" width="4.38" height="10.40" fill="#179d5a"/><rect x="718.85" y="336.70" width="4.38" height="8.60" fill="#bdbdbd"/><rect x="718.85" y="325.80" width="4.38" height="10.40" fill="#179d5a"/><rect x="723.52" y="319.20" width="4.38" height="26.10" fill="#bdbdbd"/><rect x="723.52" y="298.70" width="4.38" height="20.00" fill="#179d5a"/><rect x="728.20" y="319.20" width="4.38" height="26.10" fill="#bdbdbd"/><rect x="728.20" y="298.70" width="4.38" height="20.00" fill="#179d5a"/><rect x="732.88" y="319.20" width="4.38" height="26.10" fill="#bdbdbd"/><rect x="732.88" y="298.70" width="4.38" height="20.00" fill="#179d5a"/><rect x="737.55" y="332.00" width="4.38" height="13.30" fill="#bdbdbd"/><rect x="737.55" y="288.00" width="4.38" height="43.50" fill="#179d5a"/><rect x="742.22" y="332.00" width="4.38" height="13.30" fill="#bdbdbd"/><rect x="742.22" y="288.00" width="4.38" height="43.50" fill="#179d5a"/><rect x="746.90" y="332.00" width="4.38" height="13.30" fill="#bdbdbd"/><rect x="746.90" y="288.00" width="4.38" height="43.50" fill="#179d5a"/><rect x="751.58" y="332.00" width="4.38" height="13.30" fill="#bdbdbd"/><rect x="751.58" y="288.00" width="4.38" height="43.50" fill="#179d5a"/><rect x="756.25" y="331.20" width="4.38" height="14.10" fill="#bdbdbd"/><rect x="756.25" y="284.20" width="4.38" height="46.50" fill="#179d5a"/><rect x="760.92" y="331.20" width="4.38" height="14.10" fill="#bdbdbd"/><rect x="760.92" y="284.20" width="4.38" height="46.50" fill="#179d5a"/><rect x="765.60" y="331.20" width="4.38" height="14.10" fill="#bdbdbd"/><rect x="765.60" y="284.20" width="4.38" height="46.50" fill="#179d5a"/><rect x="575.8" y="271.5" width="0.8" height="74" fill="#c6c8cc"/><circle cx="576.2" cy="335.2" r="1.6" fill="#139a56"/></svg>
<div style="position:absolute;left:454.79999999999995px;top:348.2px;width:9.2px;height:9.2px;border-radius:50%;background:#8d9094;color:#fff;font:bold 5.5px/9.2px 'Liberation Sans';text-align:center">1</div>
<div style="position:absolute;left:534.15px;top:348.2px;width:9.2px;height:9.2px;border-radius:50%;background:#8d9094;color:#fff;font:bold 5.5px/9.2px 'Liberation Sans';text-align:center">1</div>
<div class="t" style="left:345.3px;width:60px;text-align:center;top:362.3px;font-size:6.5px;line-height:7.8px;color:#5f6368">06/05/25</div>
<div class="t" style="left:396.62600000000003px;width:60px;text-align:center;top:362.3px;font-size:6.5px;line-height:7.8px;color:#5f6368">17/05/25</div>
<div class="t" style="left:447.952px;width:60px;text-align:center;top:362.3px;font-size:6.5px;line-height:7.8px;color:#5f6368">28/05/25</div>
<div class="t" style="left:499.278px;width:60px;text-align:center;top:362.3px;font-size:6.5px;line-height:7.8px;color:#5f6368">08/06/25</div>
<div class="t" style="left:550.604px;width:60px;text-align:center;top:362.3px;font-size:6.5px;line-height:7.8px;color:#5f6368">19/06/25</div>
<div class="t" style="left:601.9300000000001px;width:60px;text-align:center;top:362.3px;font-size:6.5px;line-height:7.8px;color:#5f6368">30/06/25</div>
<div class="t" style="left:653.2560000000001px;width:60px;text-align:center;top:362.3px;font-size:6.5px;line-height:7.8px;color:#5f6368">11/07/25</div>
<div class="t" style="left:704.5820000000001px;width:60px;text-align:center;top:362.3px;font-size:6.5px;line-height:7.8px;color:#5f6368">22/07/25</div>
<div style="position:absolute;left:581.3px;top:271.2px;width:93.1px;height:61.9px;background:#ffffff;border:0.7px solid #e8e8e8;box-sizing:border-box;box-shadow:0 0.5px 2px rgba(0,0,0,.07)"></div>
<div class="t" style="left:589.7px;top:280.56px;font-size:6.9px;line-height:8.28px;color:#3c4043;font-weight:400;-webkit-text-stroke:0.25px #3c4043">Rabu, 18 Jun</div>
<div style="position:absolute;left:589.7px;top:299px;width:5.8px;height:5.6px;background:#bdbdbd"></div>
<div class="t" style="left:601.4px;top:298.07px;font-size:7.05px;line-height:8.46px;color:#6f7276;font-weight:400;">Tidak diindeks</div>
<div class="t" style="right:294px;top:297.92px;font-size:7.3px;line-height:8.76px;color:#3c4043;font-weight:400;-webkit-text-stroke:0.15px #3c4043">137</div>
<div style="position:absolute;left:589.7px;top:316.9px;width:5.8px;height:5.8px;background:#139a56"></div>
<div class="t" style="left:601.4px;top:315.87px;font-size:7.05px;line-height:8.46px;color:#6f7276;font-weight:400;">Terindeks</div>
<div class="t" style="right:294px;top:315.72px;font-size:7.3px;line-height:8.76px;color:#3c4043;font-weight:400;-webkit-text-stroke:0.15px #3c4043">76</div>
<div style="position:absolute;left:354.4px;top:389.3px;width:424.5px;height:32.5px;border:0.8px solid #e2e3e5;border-radius:8px;box-sizing:border-box"></div>
<svg style="position:absolute;left:367px;top:400.2px" width="10.6" height="10.6" viewBox="0 0 10.6 10.6"><circle cx="5.3" cy="5.3" r="5.3" fill="#188038"/><path d="M2.7 5.4L4.6 7.2L8 3.7" fill="none" stroke="#ffffff" stroke-width="1.45"/></svg>
<div class="t" style="left:386.5px;top:401.40px;font-size:7.5px;line-height:9.00px;color:#2d2e31;font-weight:400;-webkit-text-stroke:0.1px #2d2e31">Lihat data tentang halaman yang diindeks</div>
<svg style="position:absolute;left:758.5px;top:402px" width="4.5" height="7" viewBox="0 0 4.5 7"><path d="M0.6 0.6L3.6 3.5L0.6 6.4" fill="none" stroke="#444746" stroke-width="1"/></svg>
<div style="position:absolute;left:338px;top:453.7px;width:456px;height:120px;background:#ffffff;border-radius:12px"></div>
<svg style="position:absolute;left:349.5px;top:471.2px" width="17" height="17" viewBox="0 0 17 17"><circle cx="8.5" cy="8.5" r="8.5" fill="#8f9398"/><rect x="7.5" y="7" width="2" height="6" fill="#fff"/><circle cx="8.5" cy="4.8" r="1.15" fill="#fff"/></svg>
<div class="t" style="left:380px;top:470.53px;font-size:10.95px;line-height:13.14px;color:#1f1f1f;font-weight:400;transform:scaleY(1.08);transform-origin:0 50%">Penyebab halaman tidak diindeks</div>
<div class="t" style="left:380px;top:486.10px;font-size:7.5px;line-height:9.00px;color:#6f7276;font-weight:400;">Halaman yang tidak diindeks tidak dapat ditayangkan di Google</div>
<svg style="position:absolute;left:770.5px;top:477px" width="9" height="7" viewBox="0 0 9 7"><path d="M0 0.6H9M1.8 3.5H7.2M3.3 6.4H5.7" stroke="#444746" stroke-width="1"/></svg>
<div style="position:absolute;left:0px;top:515.6px;width:960px;height:24.4px;background:linear-gradient(90deg,#1c1a28 0%,#1d1b29 50%,#221c28 66%,#2c1c28 74%,#3a1b24 81%,#30221f 90%,#2b2a28 100%)"></div>
<div style="position:absolute;left:9.8px;top:522.5px;width:10.5px;height:10.5px;border-radius:50%;background:radial-gradient(circle at 40% 35%,#ffc23a,#f08a1c 80%)"></div>
<div style="position:absolute;left:14px;top:528.5px;width:7.5px;height:3.2px;border-radius:2px;background:#d6e2f0"></div>
<div style="position:absolute;left:15.2px;top:519px;width:7.6px;height:7.6px;border-radius:50%;background:#f5a3b3;color:#b3213c;font:bold 5px/7.6px 'Liberation Sans';text-align:center">5</div>
<div class="t" style="left:25px;top:520.52px;font-size:5.8px;line-height:6.96px;color:#f0f0f0;font-weight:400;-webkit-text-stroke:0.2px #f0f0f0">89°F</div>
<div class="t" style="left:25px;top:528.68px;font-size:6.2px;line-height:7.44px;color:#e6e6e6;font-weight:400;">Mostly sunny</div>
<svg style="position:absolute;left:275.2px;top:522.2px" width="12" height="12" viewBox="0 0 12 12"><defs><linearGradient id="wl" x1="0" y1="0" x2="1" y2="1"><stop offset="0" stop-color="#6fd3ff"/><stop offset="1" stop-color="#1e9ae8"/></linearGradient></defs><g fill="url(#wl)"><rect x="0" y="0" width="5.6" height="5.6"/><rect x="6.4" y="0" width="5.6" height="5.6"/><rect x="0" y="6.4" width="5.6" height="5.6"/><rect x="6.4" y="6.4" width="5.6" height="5.6"/></g></svg>
<div style="position:absolute;left:293.3px;top:519.7px;width:110px;height:15.8px;background:#393b47;border-radius:8px;border:0.6px solid #4a4c58;box-sizing:border-box"></div>
<svg style="position:absolute;left:298.5px;top:523.7px" width="9" height="9" viewBox="0 0 9 9"><circle cx="3.8" cy="3.8" r="3" fill="none" stroke="#e0e0e0" stroke-width="1"/><path d="M6 6L8.5 8.5" stroke="#e0e0e0" stroke-width="1.1"/></svg>
<div class="t" style="left:311.7px;top:523.86px;font-size:6.9px;line-height:8.28px;color:#e4e4e8;font-weight:400;">Search</div>
<svg style="position:absolute;left:377.5px;top:521.5px" width="23" height="14" viewBox="0 0 23 14"><path d="M1 11C5 10 8 9.5 11.5 10.5C15 9.5 18 8 22 5" fill="none" stroke="#6b8f3a" stroke-width="0.9"/><path d="M2 8L4 10M19 3.5L20 6M17 8.5L19.5 8" stroke="#7fae45" stroke-width="0.9"/><ellipse cx="11.5" cy="7" rx="4.3" ry="5.6" fill="#b78456"/><ellipse cx="11.5" cy="9" rx="2.6" ry="3.2" fill="#e7caa0"/><circle cx="9.8" cy="4.8" r="1.7" fill="#f3e2c0"/><circle cx="13.2" cy="4.8" r="1.7" fill="#f3e2c0"/><circle cx="9.8" cy="4.8" r="0.7" fill="#3a2a1a"/><circle cx="13.2" cy="4.8" r="0.7" fill="#3a2a1a"/><path d="M11 6L11.5 7L12 6Z" fill="#e0a030"/></svg>
<svg style="position:absolute;left:405px;top:521px" width="14" height="14" viewBox="0 0 14 14"><rect x="0.5" y="4" width="9" height="8" rx="0.8" fill="#6d6d73"/><rect x="3.5" y="1.5" width="9.5" height="8.5" rx="0.8" fill="#e6e6ea"/></svg>
<svg style="position:absolute;left:430px;top:521px" width="14" height="14" viewBox="0 0 14 14"><path d="M3 3C3.5 1.2 5 0.8 6.5 0.8H9C10.5 0.8 11.5 2 11 3.5L9.5 9C9 10.5 8 11.2 6.5 11.2" fill="#3d8ff5"/><path d="M11 3C12.5 3 13.5 4 13.2 5.5L12 10.5C11.6 12.2 10.5 13.2 9 13.2H5C3.5 13.2 2.5 12 3 10.5L4.5 5" fill="#ef5fa7"/><path d="M3 3.2L1 10C0.5 11.8 1.5 13.2 3.2 13.2H6L7.8 6Z" fill="#f6a13a"/><path d="M6.5 0.8H9.2L7.6 6.5H4.6Z" fill="#7a5cf5"/><path d="M7.6 6.5L10.6 6.5L9 13.2H6Z" fill="#c86bf0"/></svg>
<svg style="position:absolute;left:453px;top:521px" width="14" height="14" viewBox="0 0 14 14"><rect x="1" y="1" width="12" height="12" fill="#3d9b2f"/><rect x="3.2" y="4" width="2.6" height="2.6" fill="#111"/><rect x="8.2" y="4" width="2.6" height="2.6" fill="#111"/><rect x="5.5" y="6.6" width="3" height="4" fill="#111"/><rect x="4.3" y="8.5" width="1.2" height="2.4" fill="#111"/><rect x="8.5" y="8.5" width="1.2" height="2.4" fill="#111"/></svg>
<svg style="position:absolute;left:475px;top:521px" width="14" height="14" viewBox="0 0 14 14"><circle cx="7" cy="7" r="6" fill="#0f6fc6"/><path d="M1.3 8C1 4 4 1 7.5 1C10.5 1 13 3.3 13 6.2C13 8 11.5 9.2 9.8 9.2C8.6 9.2 7.8 8.5 7.8 7.6C7.8 6.5 8.8 6 8.8 5.2C8.8 4.2 7.8 3.6 6.6 3.6C4.2 3.6 2.5 5.5 2.5 7.8" fill="#35c1f1"/><path d="M2.5 7.8C2.5 10.8 5 13 8 13C9.5 13 10.8 12.5 11.8 11.6C10.5 12 8.5 11.8 7.2 10.6" fill="#52d36b"/></svg>
<svg style="position:absolute;left:497px;top:521px" width="14" height="14" viewBox="0 0 14 14"><rect x="3" y="1" width="10" height="12" rx="1" fill="#2b7cd3"/><rect x="3" y="1" width="10" height="4" rx="1" fill="#41a5ee"/><rect x="0.5" y="3.5" width="7.5" height="7.5" rx="0.8" fill="#185abd"/><text x="4.25" y="9.4" font-size="5.6" font-family="Liberation Sans" font-weight="700" fill="#fff" text-anchor="middle">W</text></svg>
<svg style="position:absolute;left:519px;top:521px" width="14" height="14" viewBox="0 0 14 14"><path d="M10 0.6L13.2 2.2V11.8L10 13.4L4.2 8.2L1.8 10L0.8 9.5V4.5L1.8 4L4.2 5.8Z" fill="#23a9f2"/><path d="M10 3.8V10.2L5.8 7Z" fill="#1c1a28"/><path d="M1.8 4L4.2 5.8L2.6 7L4.2 8.2L1.8 10L0.8 9.5V4.5Z" fill="#0d6fc2"/></svg>
<svg style="position:absolute;left:541px;top:521px" width="14" height="14" viewBox="0 0 14 14"><path d="M1 2.5H5.5L6.8 3.8H13V12H1Z" fill="#e8a92a"/><rect x="1" y="5" width="12" height="7" fill="#ffd24d"/><rect x="3.5" y="9" width="7" height="3" fill="#2f8ae0"/></svg>
<svg style="position:absolute;left:563px;top:521px" width="14" height="14" viewBox="0 0 14 14"><rect x="0.8" y="2" width="12.4" height="10" rx="0.8" fill="#0c0c0c" stroke="#8a8a8a" stroke-width="0.6"/><path d="M2.6 4.8L4.2 5.8L2.6 6.8" stroke="#e8e8e8" stroke-width="0.7" fill="none"/><path d="M5 6.8H7.5" stroke="#e8e8e8" stroke-width="0.6"/></svg>
<svg style="position:absolute;left:585px;top:521px" width="14" height="14" viewBox="0 0 14 14"><path d="M1.8 4H12.2L11.8 12.6H2.2Z" fill="#f4f4f6"/><path d="M4.6 4C4.6 1.5 9.4 1.5 9.4 4" fill="none" stroke="#3ba0e8" stroke-width="1"/><rect x="4.4" y="6" width="2.3" height="2.3" fill="#f25022"/><rect x="7.3" y="6" width="2.3" height="2.3" fill="#7fba00"/><rect x="4.4" y="8.9" width="2.3" height="2.3" fill="#00a4ef"/><rect x="7.3" y="8.9" width="2.3" height="2.3" fill="#ffb900"/></svg>
<svg style="position:absolute;left:607px;top:521px" width="14" height="14" viewBox="0 0 14 14"><circle cx="7" cy="7.5" r="5.8" fill="#ff7a1a"/><path d="M1.4 6.5C1.5 3 4.5 0.8 8 1.2C7.2 2 7.2 3 7.8 3.5C10 3.2 12.5 5 12.6 8C12.2 6.5 10.8 5.6 9.5 5.6" fill="#ffb02e"/><circle cx="7.2" cy="8" r="3.3" fill="#6d3ad6"/><path d="M3.8 7.5C4 10 6 11.6 8.5 11.3C10.2 11 11.6 9.8 12.2 8.2C11.5 11.5 8.5 13.5 5.5 13C2.8 12.4 1.2 10 1.4 7Z" fill="#ff5a1f"/></svg>
<svg style="position:absolute;left:629px;top:521px" width="14" height="14" viewBox="0 0 14 14"><circle cx="7" cy="7" r="6" fill="#db4437"/><path d="M12.2 4A6 6 0 0 1 7 13L9.6 8.5Z" fill="#f4b400"/><path d="M1.8 4A6 6 0 0 0 7 13L4.4 8.5Z" fill="#0f9d58"/><path d="M1.8 4L4.4 8.5L7 4H12.2A6 6 0 0 0 1.8 4Z" fill="#db4437"/><circle cx="7" cy="7" r="2.8" fill="#fff"/><circle cx="7" cy="7" r="2.1" fill="#4285f4"/></svg>
<svg style="position:absolute;left:651px;top:521px" width="14" height="14" viewBox="0 0 14 14"><path d="M2.5 2.5L5 1H9L11.5 2.5L12.5 6L10.5 11L7 13L3.5 11L1.5 6Z" fill="#fb542b"/><path d="M4.2 4.5L7 3.8L9.8 4.5L8.8 8.5L7 9.8L5.2 8.5Z" fill="#fff"/><path d="M5.5 5.5L7 7L8.5 5.5" fill="none" stroke="#fb542b" stroke-width="0.6"/></svg>
<svg style="position:absolute;left:673px;top:521px" width="14" height="14" viewBox="0 0 14 14"><circle cx="7" cy="7.5" r="6" fill="#5865f2"/><path d="M4 5.5C5.5 4.5 8.5 4.5 10 5.5L10.6 9C9.5 9.8 4.5 9.8 3.4 9Z" fill="#fff"/><circle cx="5.6" cy="7.3" r="0.8" fill="#5865f2"/><circle cx="8.4" cy="7.3" r="0.8" fill="#5865f2"/></svg>
<div style="position:absolute;left:650px;top:517.5px;width:16px;height:20px;background:rgba(255,255,255,.08);border-radius:3px"></div>
<div style="position:absolute;left:654px;top:535.8px;width:8px;height:1.6px;background:#4cc2ff;border-radius:1px"></div>
<div style="position:absolute;left:546.8px;top:536px;width:2.4px;height:1.3px;background:#9a9aa0;border-radius:1px"></div>
<div style="position:absolute;left:634.8px;top:536px;width:2.4px;height:1.3px;background:#9a9aa0;border-radius:1px"></div>
<div style="position:absolute;left:678.8px;top:536px;width:2.4px;height:1.3px;background:#9a9aa0;border-radius:1px"></div>
<div style="position:absolute;left:638.5px;top:518.7px;width:6.5px;height:6.5px;border-radius:50%;background:#d9466f;color:#fff;font:bold 4px/6.5px 'Liberation Sans';text-align:center">A</div>
<div style="position:absolute;left:682.5px;top:518.3px;width:7.5px;height:6.5px;border-radius:3.2px;background:#e0426e;color:#fff;font:bold 4px/6.5px 'Liberation Sans';text-align:center">9+</div>
<svg style="position:absolute;left:837px;top:526.5px" width="7" height="4" viewBox="0 0 7 4"><path d="M0.5 3.5L3.5 0.6L6.5 3.5" fill="none" stroke="#e8e8e8" stroke-width="0.9"/></svg>
<div class="t" style="left:853.5px;top:524.76px;font-size:5.9px;line-height:7.08px;color:#e8e8e8;font-weight:400;">ENG</div>
<svg style="position:absolute;left:873px;top:523.5px" width="9" height="7" viewBox="0 0 9 7"><path d="M0.3 2.5A6 6 0 0 1 8.7 2.5L4.5 6.8Z" fill="#e8e8e8"/></svg>
<svg style="position:absolute;left:884.5px;top:523.5px" width="9" height="8" viewBox="0 0 9 8"><path d="M0.5 2.8H2L4.3 0.8V7.2L2 5.2H0.5Z" fill="#e8e8e8"/><path d="M5.8 2.5A2 2 0 0 1 5.8 5.5M7.2 1.3A3.6 3.6 0 0 1 7.2 6.7" fill="none" stroke="#e8e8e8" stroke-width="0.7"/></svg>
<svg style="position:absolute;left:898px;top:522.5px" width="10" height="8" viewBox="0 0 10 8"><rect x="0.5" y="2" width="8.5" height="5.5" fill="#e8e8e8"/><path d="M3 2L4.5 0L5.8 2" fill="#e8e8e8"/></svg>
<div class="t" style="right:21.700000000000045px;top:520.54px;font-size:6.1px;line-height:7.32px;color:#ffffff;font-weight:400;">2:27 PM</div>
<div class="t" style="right:21.399999999999977px;top:528.34px;font-size:6.1px;line-height:7.32px;color:#ffffff;font-weight:400;">8/4/2025</div>
<svg style="position:absolute;left:942px;top:523px" width="9" height="10" viewBox="0 0 9 10"><path d="M1.5 7.5V4.5C1.5 2.5 3 1.2 4.5 1.2C6 1.2 7.5 2.5 7.5 4.5V7.5L8.5 8.3H0.5Z" fill="#e8e8e8"/><rect x="3.2" y="3.2" width="2.6" height="2.6" fill="#2a1b24"/></svg>
<div style="position:absolute;left:556px;top:38px;width:177px;height:24px;background:#1c1b20;border-radius:5px;box-shadow:0 1px 3px rgba(0,0,0,.4)"></div>
<div class="t" style="left:564px;top:46.44px;font-size:6.6px;line-height:7.92px;color:#f0f0f0;font-weight:400;-webkit-text-stroke:0.3px #f0f0f0">sha</div>
<div class="t" style="left:653.4px;top:46.44px;font-size:6.6px;line-height:7.92px;color:#d8d8d8;font-weight:400;">2/3</div>
<div style="position:absolute;left:670.3px;top:42px;width:0.8px;height:16px;background:#4a4a50"></div>
<svg style="position:absolute;left:680.5px;top:48px" width="7" height="4" viewBox="0 0 7 4"><path d="M0.5 3.5L3.5 0.7L6.5 3.5" fill="none" stroke="#e0e0e0" stroke-width="0.9"/></svg>
<svg style="position:absolute;left:698.5px;top:48.5px" width="7" height="4" viewBox="0 0 7 4"><path d="M0.5 0.5L3.5 3.3L6.5 0.5" fill="none" stroke="#e0e0e0" stroke-width="0.9"/></svg>
<svg style="position:absolute;left:716.8px;top:47px" width="6" height="6" viewBox="0 0 6 6"><path d="M0.5 0.5L5.5 5.5M5.5 0.5L0.5 5.5" stroke="#e0e0e0" stroke-width="0.9"/></svg>
</body></html>
